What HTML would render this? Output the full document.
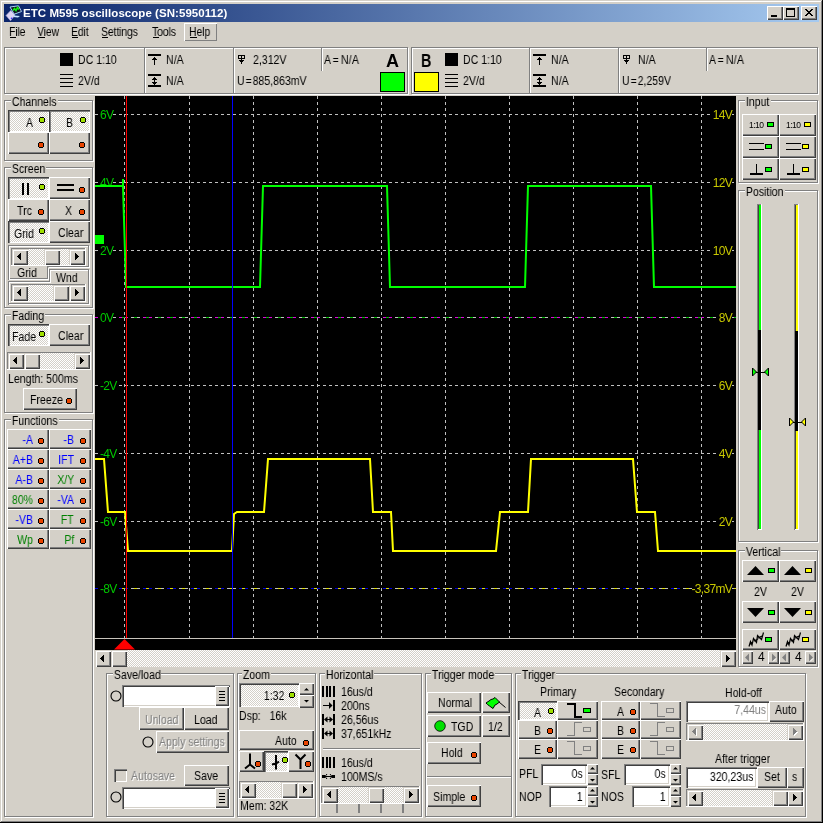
<!DOCTYPE html><html><head><meta charset="utf-8"><style>
*{margin:0;padding:0;box-sizing:border-box}
html,body{width:823px;height:823px;overflow:hidden}
body{background:#D4D0C8;position:relative;font-family:"Liberation Sans",sans-serif;font-size:11px;color:#000}
.a{position:absolute;display:block}
.t{position:absolute;white-space:nowrap;line-height:13px;height:13px;will-change:transform}
svg.a{will-change:transform}
svg.a{overflow:visible}
</style></head><body>
<div class="a" style="left:0px;top:0px;width:823px;height:1px;background:#D4D0C8"></div>
<div class="a" style="left:1px;top:1px;width:821px;height:1px;background:#fff"></div>
<div class="a" style="left:1px;top:1px;width:1px;height:821px;background:#fff"></div>
<div class="a" style="left:821px;top:1px;width:1px;height:821px;background:#808080"></div>
<div class="a" style="left:1px;top:821px;width:821px;height:1px;background:#808080"></div>
<div class="a" style="left:822px;top:0px;width:1px;height:823px;background:#000"></div>
<div class="a" style="left:0px;top:822px;width:823px;height:1px;background:#000"></div>
<div class="a" style="left:4px;top:4px;width:815px;height:18px;background:linear-gradient(to right,#0A246A,#A6CAF0)"></div>
<svg class="a" style="left:0px;top:0px" width="23" height="23" viewBox="0 0 23 23">
<path d="M6 15.5 L10.8 10.5 L15 15 L10.5 20.8 Z" fill="#DCD4F4" stroke="#B0A8D8" stroke-width="0.6"/>
<path d="M14 15.5 L20 16 L18 17.5 L13 17 Z" fill="#C8E4FF"/>
<circle cx="11.5" cy="18.3" r="0.8" fill="#3020FF"/>
<path d="M10 7 L18.5 5.8 L21.5 11.5 L14.2 14.2 Z" fill="#101820" stroke="#A8D0F8" stroke-width="1"/>
<path d="M13 10.5 L14.5 8.5 L16 10.5 L17.5 7.5 L19 9.5" stroke="#10F010" stroke-width="1.6" fill="none"/>
</svg>
<div class="t" style="left:23px;top:6.52px;color:#fff;font-size:11.5px;letter-spacing:0.05px;font-weight:bold;transform-origin:0 0;">ETC M595 oscilloscope (SN:5950112)</div>
<div class="a" style="left:767px;top:6px;width:16px;height:14px;background:#D4D0C8;box-shadow:inset 1px 1px 0 #fff,inset -1px -1px 0 #404040,inset -2px -2px 0 #808080;"></div>
<div class="a" style="left:783px;top:6px;width:16px;height:14px;background:#D4D0C8;box-shadow:inset 1px 1px 0 #fff,inset -1px -1px 0 #404040,inset -2px -2px 0 #808080;"></div>
<div class="a" style="left:801px;top:6px;width:16px;height:14px;background:#D4D0C8;box-shadow:inset 1px 1px 0 #fff,inset -1px -1px 0 #404040,inset -2px -2px 0 #808080;"></div>
<div class="a" style="left:771px;top:15px;width:6px;height:2px;background:#000"></div>
<div class="a" style="left:786px;top:8px;width:9px;height:9px;border:1px solid #000;border-top-width:2px"></div>
<svg class="a" style="left:801px;top:6px" width="16" height="14" shape-rendering="crispEdges"><path d="M4 3h2v1h1v1h2v-1h1v-1h2v1h-1v1h-1v1h-1v1h1v1h1v1h1v1h-2v-1h-1v-1h-2v1h-1v1h-2v-1h1v-1h1v-1h1v-1h-1v-1h-1v-1h-1z" fill="#000"/></svg>
<div class="t" style="left:9px;top:26.34px;color:#000;font-size:12px;letter-spacing:-0.2px;transform:scaleX(0.88);transform-origin:0 0;">File</div>
<div class="t" style="left:37px;top:26.34px;color:#000;font-size:12px;letter-spacing:-0.2px;transform:scaleX(0.88);transform-origin:0 0;">View</div>
<div class="t" style="left:71px;top:26.34px;color:#000;font-size:12px;letter-spacing:-0.2px;transform:scaleX(0.88);transform-origin:0 0;">Edit</div>
<div class="t" style="left:101px;top:26.34px;color:#000;font-size:12px;letter-spacing:-0.2px;transform:scaleX(0.88);transform-origin:0 0;">Settings</div>
<div class="t" style="left:152px;top:26.34px;color:#000;font-size:12px;letter-spacing:-0.2px;transform:scaleX(0.88);transform-origin:0 0;">Tools</div>
<div class="a" style="left:184px;top:23px;width:33px;height:18px;box-shadow:inset 1px 1px 0 #fff,inset -1px -1px 0 #808080"></div>
<div class="t" style="left:189px;top:26.34px;color:#000;font-size:12px;letter-spacing:-0.2px;transform:scaleX(0.88);transform-origin:0 0;">Help</div>
<div class="a" style="left:10px;top:37px;width:6px;height:1px;background:#000"></div>
<div class="a" style="left:38px;top:37px;width:7px;height:1px;background:#000"></div>
<div class="a" style="left:72px;top:37px;width:6px;height:1px;background:#000"></div>
<div class="a" style="left:102px;top:37px;width:6px;height:1px;background:#000"></div>
<div class="a" style="left:153px;top:37px;width:6px;height:1px;background:#000"></div>
<div class="a" style="left:190px;top:37px;width:7px;height:1px;background:#000"></div>
<div class="a" style="left:5px;top:48px;width:404px;height:47px;border:1px solid #fff"></div>
<div class="a" style="left:4px;top:47px;width:404px;height:47px;border:1px solid #808080"></div>
<div class="a" style="left:412px;top:48px;width:407px;height:47px;border:1px solid #fff"></div>
<div class="a" style="left:411px;top:47px;width:407px;height:47px;border:1px solid #808080"></div>
<div class="a" style="left:60px;top:53px;width:13px;height:13px;background:#000"></div>
<div class="t" style="left:78px;top:54.34px;color:#000;font-size:12px;letter-spacing:0px;transform:scaleX(0.88);transform-origin:0 0;">DC 1:10</div>
<div class="a" style="left:60px;top:74px;width:13px;height:1px;background:#000"></div>
<div class="a" style="left:60px;top:78px;width:13px;height:1px;background:#000"></div>
<div class="a" style="left:60px;top:82px;width:13px;height:1px;background:#000"></div>
<div class="a" style="left:60px;top:86px;width:13px;height:1px;background:#000"></div>
<div class="t" style="left:78px;top:75.34px;color:#000;font-size:12px;letter-spacing:0px;transform:scaleX(0.88);transform-origin:0 0;">2V/d</div>
<div class="a" style="left:144px;top:48px;width:1px;height:45px;background:#808080"></div>
<div class="a" style="left:145px;top:48px;width:1px;height:45px;background:#fff"></div>
<svg class="a" style="left:148px;top:53px;" width="13" height="13" viewBox="148 53 13 13" shape-rendering="crispEdges"><path d="M148 54h13v2h-13z M154 57h1v8h-1z M152 59h5v1h-5z M153 58h3v1h-3z" fill="#000"/></svg>
<div class="t" style="left:166px;top:54.34px;color:#000;font-size:12px;letter-spacing:0px;transform:scaleX(0.88);transform-origin:0 0;">N/A</div>
<svg class="a" style="left:148px;top:73px;" width="13" height="15" viewBox="148 73 13 15" shape-rendering="crispEdges"><path d="M148 74h13v2h-13z M148 85h13v2h-13z M154 77h1v8h-1z M153 78h3v1h-3z M152 79h5v1h-5z M153 83h3v1h-3z M152 82h5v1h-5z" fill="#000"/></svg>
<div class="t" style="left:166px;top:75.34px;color:#000;font-size:12px;letter-spacing:0px;transform:scaleX(0.88);transform-origin:0 0;">N/A</div>
<div class="a" style="left:233px;top:48px;width:1px;height:45px;background:#808080"></div>
<div class="a" style="left:234px;top:48px;width:1px;height:45px;background:#fff"></div>
<svg class="a" style="left:238px;top:54px;" width="8" height="10" viewBox="238 54 8 10" shape-rendering="crispEdges"><path d="M238 55h7v1h-7z M238 55h1v3h-1z M244 55h1v3h-1z M238 58h7v1h-7z M241 56h1v8h-1z M239 60h5v1h-5z M240 61h3v1h-3z" fill="#000"/></svg>
<div class="t" style="left:253px;top:54.34px;color:#000;font-size:12px;letter-spacing:0px;transform:scaleX(0.88);transform-origin:0 0;">2,312V</div>
<div class="t" style="left:237px;top:75.34px;color:#000;font-size:12px;letter-spacing:0px;transform:scaleX(0.88);transform-origin:0 0;">U<span style="margin:0 1px">=</span>885,863mV</div>
<div class="a" style="left:321px;top:48px;width:1px;height:23px;background:#808080"></div>
<div class="a" style="left:322px;top:48px;width:1px;height:23px;background:#fff"></div>
<div class="t" style="left:324px;top:54.34px;color:#000;font-size:12px;letter-spacing:0.3px;transform:scaleX(0.88);transform-origin:0 0;">A<span style="margin:0 2px 0 1.5px">=</span>N/A</div>
<div class="t" style="left:386px;top:55.26px;color:#000;font-size:18px;letter-spacing:0px;font-weight:bold;transform-origin:0 0;">A</div>
<div class="a" style="left:380px;top:72px;width:25px;height:20px;background:#00FF00;border:1px solid #000"></div>
<div class="a" style="left:445px;top:53px;width:13px;height:13px;background:#000"></div>
<div class="t" style="left:463px;top:54.34px;color:#000;font-size:12px;letter-spacing:0px;transform:scaleX(0.88);transform-origin:0 0;">DC 1:10</div>
<div class="a" style="left:445px;top:74px;width:13px;height:1px;background:#000"></div>
<div class="a" style="left:445px;top:78px;width:13px;height:1px;background:#000"></div>
<div class="a" style="left:445px;top:82px;width:13px;height:1px;background:#000"></div>
<div class="a" style="left:445px;top:86px;width:13px;height:1px;background:#000"></div>
<div class="t" style="left:463px;top:75.34px;color:#000;font-size:12px;letter-spacing:0px;transform:scaleX(0.88);transform-origin:0 0;">2V/d</div>
<div class="a" style="left:529px;top:48px;width:1px;height:45px;background:#808080"></div>
<div class="a" style="left:530px;top:48px;width:1px;height:45px;background:#fff"></div>
<svg class="a" style="left:533px;top:53px;" width="13" height="13" viewBox="533 53 13 13" shape-rendering="crispEdges"><path d="M533 54h13v2h-13z M539 57h1v8h-1z M537 59h5v1h-5z M538 58h3v1h-3z" fill="#000"/></svg>
<div class="t" style="left:551px;top:54.34px;color:#000;font-size:12px;letter-spacing:0px;transform:scaleX(0.88);transform-origin:0 0;">N/A</div>
<svg class="a" style="left:533px;top:73px;" width="13" height="15" viewBox="533 73 13 15" shape-rendering="crispEdges"><path d="M533 74h13v2h-13z M533 85h13v2h-13z M539 77h1v8h-1z M538 78h3v1h-3z M537 79h5v1h-5z M538 83h3v1h-3z M537 82h5v1h-5z" fill="#000"/></svg>
<div class="t" style="left:551px;top:75.34px;color:#000;font-size:12px;letter-spacing:0px;transform:scaleX(0.88);transform-origin:0 0;">N/A</div>
<div class="a" style="left:618px;top:48px;width:1px;height:45px;background:#808080"></div>
<div class="a" style="left:619px;top:48px;width:1px;height:45px;background:#fff"></div>
<svg class="a" style="left:623px;top:54px;" width="8" height="10" viewBox="623 54 8 10" shape-rendering="crispEdges"><path d="M623 55h7v1h-7z M623 55h1v3h-1z M629 55h1v3h-1z M623 58h7v1h-7z M626 56h1v8h-1z M624 60h5v1h-5z M625 61h3v1h-3z" fill="#000"/></svg>
<div class="t" style="left:638px;top:54.34px;color:#000;font-size:12px;letter-spacing:0px;transform:scaleX(0.88);transform-origin:0 0;">N/A</div>
<div class="t" style="left:622px;top:75.34px;color:#000;font-size:12px;letter-spacing:0px;transform:scaleX(0.88);transform-origin:0 0;">U<span style="margin:0 1px">=</span>2,259V</div>
<div class="a" style="left:706px;top:48px;width:1px;height:23px;background:#808080"></div>
<div class="a" style="left:707px;top:48px;width:1px;height:23px;background:#fff"></div>
<div class="t" style="left:709px;top:54.34px;color:#000;font-size:12px;letter-spacing:0.3px;transform:scaleX(0.88);transform-origin:0 0;">A<span style="margin:0 2px 0 1.5px">=</span>N/A</div>
<div class="t" style="left:421px;top:55.26px;color:#000;font-size:18px;letter-spacing:0px;font-weight:bold;transform-origin:0 0;transform:scaleX(0.8);transform-origin:0 0">B</div>
<div class="a" style="left:414px;top:72px;width:25px;height:20px;background:#FFFF00;border:1px solid #000"></div>
<div class="a" style="left:5px;top:101px;width:89px;height:61px;border:1px solid #fff"></div>
<div class="a" style="left:4px;top:100px;width:89px;height:61px;border:1px solid #808080"></div>
<div class="t" style="left:11px;top:96.34px;padding:0 1px;background:#D4D0C8;font-size:12px;transform:scaleX(0.88);transform-origin:0 0">Channels</div>
<div class="a" style="left:8px;top:110px;width:41px;height:22px;background:repeating-conic-gradient(#fff 0 25%,#D4D0C8 0 50%) 0 0/2px 2px;box-shadow:inset 1px 1px 0 #404040,inset 2px 2px 0 #808080,inset -1px -1px 0 #fff;"></div>
<div class="a" style="left:49px;top:110px;width:41px;height:22px;background:repeating-conic-gradient(#fff 0 25%,#D4D0C8 0 50%) 0 0/2px 2px;box-shadow:inset 1px 1px 0 #404040,inset 2px 2px 0 #808080,inset -1px -1px 0 #fff;"></div>
<div class="a" style="left:8px;top:132px;width:41px;height:22px;background:#D4D0C8;box-shadow:inset 1px 1px 0 #fff,inset -1px -1px 0 #404040,inset -2px -2px 0 #808080;"></div>
<div class="a" style="left:49px;top:132px;width:41px;height:22px;background:#D4D0C8;box-shadow:inset 1px 1px 0 #fff,inset -1px -1px 0 #404040,inset -2px -2px 0 #808080;"></div>
<div class="t" style="left:26px;top:117.34px;color:#000;font-size:12px;letter-spacing:0px;transform:scaleX(0.88);transform-origin:0 0;">A</div>
<svg class="a" style="left:39px;top:117px" width="6" height="6" shape-rendering="crispEdges"><path d="M1 0h4v1h1v4h-1v1h-4v-1h-1v-4h1z" fill="#000"/><rect x="1" y="1" width="4" height="4" fill="#A0E000"/></svg>
<div class="t" style="left:66px;top:117.34px;color:#000;font-size:12px;letter-spacing:0px;transform:scaleX(0.88);transform-origin:0 0;">B</div>
<svg class="a" style="left:80px;top:117px" width="6" height="6" shape-rendering="crispEdges"><path d="M1 0h4v1h1v4h-1v1h-4v-1h-1v-4h1z" fill="#000"/><rect x="1" y="1" width="4" height="4" fill="#A0E000"/></svg>
<svg class="a" style="left:38px;top:142px" width="6" height="6" shape-rendering="crispEdges"><path d="M1 0h4v1h1v4h-1v1h-4v-1h-1v-4h1z" fill="#000"/><rect x="1" y="1" width="4" height="4" fill="#E84400"/></svg>
<svg class="a" style="left:79px;top:142px" width="6" height="6" shape-rendering="crispEdges"><path d="M1 0h4v1h1v4h-1v1h-4v-1h-1v-4h1z" fill="#000"/><rect x="1" y="1" width="4" height="4" fill="#E84400"/></svg>
<div class="a" style="left:5px;top:168px;width:89px;height:141px;border:1px solid #fff"></div>
<div class="a" style="left:4px;top:167px;width:89px;height:141px;border:1px solid #808080"></div>
<div class="t" style="left:11px;top:163.34px;padding:0 1px;background:#D4D0C8;font-size:12px;transform:scaleX(0.88);transform-origin:0 0">Screen</div>
<div class="a" style="left:8px;top:177px;width:41px;height:22px;background:repeating-conic-gradient(#fff 0 25%,#D4D0C8 0 50%) 0 0/2px 2px;box-shadow:inset 1px 1px 0 #404040,inset 2px 2px 0 #808080,inset -1px -1px 0 #fff;"></div>
<div class="a" style="left:49px;top:177px;width:41px;height:22px;background:#D4D0C8;box-shadow:inset 1px 1px 0 #fff,inset -1px -1px 0 #404040,inset -2px -2px 0 #808080;"></div>
<div class="a" style="left:22px;top:183px;width:2px;height:12px;background:#000"></div>
<div class="a" style="left:27px;top:183px;width:2px;height:12px;background:#000"></div>
<svg class="a" style="left:39px;top:184px" width="6" height="6" shape-rendering="crispEdges"><path d="M1 0h4v1h1v4h-1v1h-4v-1h-1v-4h1z" fill="#000"/><rect x="1" y="1" width="4" height="4" fill="#A0E000"/></svg>
<div class="a" style="left:57px;top:184px;width:17px;height:2px;background:#000"></div>
<div class="a" style="left:57px;top:189px;width:17px;height:2px;background:#000"></div>
<svg class="a" style="left:79px;top:187px" width="6" height="6" shape-rendering="crispEdges"><path d="M1 0h4v1h1v4h-1v1h-4v-1h-1v-4h1z" fill="#000"/><rect x="1" y="1" width="4" height="4" fill="#E84400"/></svg>
<div class="a" style="left:8px;top:199px;width:41px;height:22px;background:#D4D0C8;box-shadow:inset 1px 1px 0 #fff,inset -1px -1px 0 #404040,inset -2px -2px 0 #808080;"></div>
<div class="a" style="left:49px;top:199px;width:41px;height:22px;background:#D4D0C8;box-shadow:inset 1px 1px 0 #fff,inset -1px -1px 0 #404040,inset -2px -2px 0 #808080;"></div>
<div class="t" style="left:17px;top:205.34px;color:#000;font-size:12px;letter-spacing:0px;transform:scaleX(0.88);transform-origin:0 0;">Trc</div>
<svg class="a" style="left:38px;top:209px" width="6" height="6" shape-rendering="crispEdges"><path d="M1 0h4v1h1v4h-1v1h-4v-1h-1v-4h1z" fill="#000"/><rect x="1" y="1" width="4" height="4" fill="#E84400"/></svg>
<div class="t" style="left:65px;top:205.34px;color:#000;font-size:12px;letter-spacing:0px;transform:scaleX(0.88);transform-origin:0 0;">X</div>
<svg class="a" style="left:79px;top:209px" width="6" height="6" shape-rendering="crispEdges"><path d="M1 0h4v1h1v4h-1v1h-4v-1h-1v-4h1z" fill="#000"/><rect x="1" y="1" width="4" height="4" fill="#E84400"/></svg>
<div class="a" style="left:8px;top:221px;width:41px;height:22px;background:repeating-conic-gradient(#fff 0 25%,#D4D0C8 0 50%) 0 0/2px 2px;box-shadow:inset 1px 1px 0 #404040,inset 2px 2px 0 #808080,inset -1px -1px 0 #fff;"></div>
<div class="a" style="left:49px;top:221px;width:41px;height:22px;background:#D4D0C8;box-shadow:inset 1px 1px 0 #fff,inset -1px -1px 0 #404040,inset -2px -2px 0 #808080;"></div>
<div class="t" style="left:14px;top:228.34px;color:#000;font-size:12px;letter-spacing:0px;transform:scaleX(0.88);transform-origin:0 0;">Grid</div>
<svg class="a" style="left:39px;top:228px" width="6" height="6" shape-rendering="crispEdges"><path d="M1 0h4v1h1v4h-1v1h-4v-1h-1v-4h1z" fill="#000"/><rect x="1" y="1" width="4" height="4" fill="#A0E000"/></svg>
<div class="t" style="left:58px;top:227.34px;color:#000;font-size:12px;letter-spacing:0px;transform:scaleX(0.88);transform-origin:0 0;">Clear</div>
<svg class="a" style="left:8px;top:245px;" width="82" height="61" viewBox="8 245 82 61" shape-rendering="crispEdges"><path d="M8.5 279.5V245.5H88.5V266.5H47.5V278.5H8.5" fill="none" stroke="#808080"/><path d="M9.5 278.5V246.5H87.5M48.5 267.5H89.5V245.5M48.5 267.5V279.5H8.5" fill="none" stroke="#fff"/><path d="M8.5 304.5V281.5H49.5V269.5H88.5V303.5H8.5" fill="none" stroke="#808080"/><path d="M9.5 302.5V282.5H50.5V270.5H87.5M89.5 269.5V304.5H8.5" fill="none" stroke="#fff"/></svg>
<div class="a" style="left:11px;top:248px;width:74px;height:1px;background:#808080"></div>
<div class="a" style="left:11px;top:248px;width:1px;height:17px;background:#808080"></div>
<div class="a" style="left:11px;top:265px;width:75px;height:1px;background:#fff"></div>
<div class="a" style="left:85px;top:248px;width:1px;height:18px;background:#fff"></div>
<div class="a" style="left:12px;top:249px;width:73px;height:16px;background:repeating-conic-gradient(#fff 0 25%,#D4D0C8 0 50%) 0 0/2px 2px"></div>
<div class="a" style="left:12px;top:249px;width:16px;height:16px;background:#D4D0C8;box-shadow:inset 1px 1px 0 #D4D0C8,inset 2px 2px 0 #fff,inset -1px -1px 0 #404040,inset -2px -2px 0 #808080"></div>
<div class="a" style="left:69px;top:249px;width:16px;height:16px;background:#D4D0C8;box-shadow:inset 1px 1px 0 #D4D0C8,inset 2px 2px 0 #fff,inset -1px -1px 0 #404040,inset -2px -2px 0 #808080"></div>
<div class="a" style="left:44px;top:249px;width:16px;height:16px;background:#D4D0C8;box-shadow:inset 1px 1px 0 #D4D0C8,inset 2px 2px 0 #fff,inset -1px -1px 0 #404040,inset -2px -2px 0 #808080"></div>
<svg class="a" style="left:12px;top:249px;" width="73" height="16" viewBox="12 249 73 16" shape-rendering="crispEdges"><path d="M17 256h1v1h-1zM18 255h1v3h-1zM19 254h1v5h-1zM20 253h1v7h-1zM75 253h1v7h-1zM76 254h1v5h-1zM77 255h1v3h-1zM78 256h1v1h-1z" fill="#000"/></svg>
<div class="t" style="left:17px;top:267.34px;color:#000;font-size:12px;letter-spacing:0px;transform:scaleX(0.88);transform-origin:0 0;">Grid</div>
<div class="t" style="left:56px;top:272.34px;color:#000;font-size:12px;letter-spacing:0px;transform:scaleX(0.88);transform-origin:0 0;">Wnd</div>
<div class="a" style="left:11px;top:284px;width:74px;height:1px;background:#808080"></div>
<div class="a" style="left:11px;top:284px;width:1px;height:17px;background:#808080"></div>
<div class="a" style="left:11px;top:301px;width:75px;height:1px;background:#fff"></div>
<div class="a" style="left:85px;top:284px;width:1px;height:18px;background:#fff"></div>
<div class="a" style="left:12px;top:285px;width:73px;height:16px;background:repeating-conic-gradient(#fff 0 25%,#D4D0C8 0 50%) 0 0/2px 2px"></div>
<div class="a" style="left:12px;top:285px;width:16px;height:16px;background:#D4D0C8;box-shadow:inset 1px 1px 0 #D4D0C8,inset 2px 2px 0 #fff,inset -1px -1px 0 #404040,inset -2px -2px 0 #808080"></div>
<div class="a" style="left:69px;top:285px;width:16px;height:16px;background:#D4D0C8;box-shadow:inset 1px 1px 0 #D4D0C8,inset 2px 2px 0 #fff,inset -1px -1px 0 #404040,inset -2px -2px 0 #808080"></div>
<div class="a" style="left:53px;top:285px;width:16px;height:16px;background:#D4D0C8;box-shadow:inset 1px 1px 0 #D4D0C8,inset 2px 2px 0 #fff,inset -1px -1px 0 #404040,inset -2px -2px 0 #808080"></div>
<svg class="a" style="left:12px;top:285px;" width="73" height="16" viewBox="12 285 73 16" shape-rendering="crispEdges"><path d="M17 292h1v1h-1zM18 291h1v3h-1zM19 290h1v5h-1zM20 289h1v7h-1zM75 289h1v7h-1zM76 290h1v5h-1zM77 291h1v3h-1zM78 292h1v1h-1z" fill="#000"/></svg>
<div class="a" style="left:5px;top:315px;width:89px;height:99px;border:1px solid #fff"></div>
<div class="a" style="left:4px;top:314px;width:89px;height:99px;border:1px solid #808080"></div>
<div class="t" style="left:11px;top:310.34px;padding:0 1px;background:#D4D0C8;font-size:12px;transform:scaleX(0.88);transform-origin:0 0">Fading</div>
<div class="a" style="left:8px;top:324px;width:41px;height:22px;background:repeating-conic-gradient(#fff 0 25%,#D4D0C8 0 50%) 0 0/2px 2px;box-shadow:inset 1px 1px 0 #404040,inset 2px 2px 0 #808080,inset -1px -1px 0 #fff;"></div>
<div class="a" style="left:49px;top:324px;width:41px;height:22px;background:#D4D0C8;box-shadow:inset 1px 1px 0 #fff,inset -1px -1px 0 #404040,inset -2px -2px 0 #808080;"></div>
<div class="t" style="left:12px;top:331.34px;color:#000;font-size:12px;letter-spacing:0px;transform:scaleX(0.88);transform-origin:0 0;">Fade</div>
<svg class="a" style="left:39px;top:331px" width="6" height="6" shape-rendering="crispEdges"><path d="M1 0h4v1h1v4h-1v1h-4v-1h-1v-4h1z" fill="#000"/><rect x="1" y="1" width="4" height="4" fill="#A0E000"/></svg>
<div class="t" style="left:58px;top:330.34px;color:#000;font-size:12px;letter-spacing:0px;transform:scaleX(0.88);transform-origin:0 0;">Clear</div>
<div class="a" style="left:7px;top:352px;width:83px;height:1px;background:#808080"></div>
<div class="a" style="left:7px;top:352px;width:1px;height:17px;background:#808080"></div>
<div class="a" style="left:7px;top:369px;width:84px;height:1px;background:#fff"></div>
<div class="a" style="left:90px;top:352px;width:1px;height:18px;background:#fff"></div>
<div class="a" style="left:8px;top:353px;width:82px;height:16px;background:repeating-conic-gradient(#fff 0 25%,#D4D0C8 0 50%) 0 0/2px 2px"></div>
<div class="a" style="left:8px;top:353px;width:16px;height:16px;background:#D4D0C8;box-shadow:inset 1px 1px 0 #D4D0C8,inset 2px 2px 0 #fff,inset -1px -1px 0 #404040,inset -2px -2px 0 #808080"></div>
<div class="a" style="left:74px;top:353px;width:16px;height:16px;background:#D4D0C8;box-shadow:inset 1px 1px 0 #D4D0C8,inset 2px 2px 0 #fff,inset -1px -1px 0 #404040,inset -2px -2px 0 #808080"></div>
<div class="a" style="left:24px;top:353px;width:16px;height:16px;background:#D4D0C8;box-shadow:inset 1px 1px 0 #D4D0C8,inset 2px 2px 0 #fff,inset -1px -1px 0 #404040,inset -2px -2px 0 #808080"></div>
<svg class="a" style="left:8px;top:353px;" width="82" height="16" viewBox="8 353 82 16" shape-rendering="crispEdges"><path d="M13 360h1v1h-1zM14 359h1v3h-1zM15 358h1v5h-1zM16 357h1v7h-1zM80 357h1v7h-1zM81 358h1v5h-1zM82 359h1v3h-1zM83 360h1v1h-1z" fill="#000"/></svg>
<div class="t" style="left:8px;top:373.34px;color:#000;font-size:12px;letter-spacing:0px;transform:scaleX(0.88);transform-origin:0 0;">Length: 500ms</div>
<div class="a" style="left:23px;top:388px;width:54px;height:22px;background:#D4D0C8;box-shadow:inset 1px 1px 0 #fff,inset -1px -1px 0 #404040,inset -2px -2px 0 #808080;"></div>
<div class="t" style="left:30px;top:394.34px;color:#000;font-size:12px;letter-spacing:0px;transform:scaleX(0.88);transform-origin:0 0;">Freeze</div>
<svg class="a" style="left:66px;top:398px" width="6" height="6" shape-rendering="crispEdges"><path d="M1 0h4v1h1v4h-1v1h-4v-1h-1v-4h1z" fill="#000"/><rect x="1" y="1" width="4" height="4" fill="#E84400"/></svg>
<div class="a" style="left:5px;top:420px;width:89px;height:398px;border:1px solid #fff"></div>
<div class="a" style="left:4px;top:419px;width:89px;height:398px;border:1px solid #808080"></div>
<div class="t" style="left:11px;top:415.34px;padding:0 1px;background:#D4D0C8;font-size:12px;transform:scaleX(0.88);transform-origin:0 0">Functions</div>
<div class="a" style="left:7px;top:429px;width:42px;height:20px;background:#D4D0C8;box-shadow:inset 1px 1px 0 #fff,inset -1px -1px 0 #404040,inset -2px -2px 0 #808080;"></div>
<div class="a" style="left:49px;top:429px;width:42px;height:20px;background:#D4D0C8;box-shadow:inset 1px 1px 0 #fff,inset -1px -1px 0 #404040,inset -2px -2px 0 #808080;"></div>
<div class="t" style="right:790px;top:434.34px;color:#0000FF;font-size:12px;letter-spacing:0px;transform:scaleX(0.88);transform-origin:100% 0;">-A</div>
<svg class="a" style="left:38px;top:438px" width="6" height="6" shape-rendering="crispEdges"><path d="M1 0h4v1h1v4h-1v1h-4v-1h-1v-4h1z" fill="#000"/><rect x="1" y="1" width="4" height="4" fill="#E84400"/></svg>
<div class="t" style="right:749px;top:434.34px;color:#0000FF;font-size:12px;letter-spacing:0px;transform:scaleX(0.88);transform-origin:100% 0;">-B</div>
<svg class="a" style="left:80px;top:438px" width="6" height="6" shape-rendering="crispEdges"><path d="M1 0h4v1h1v4h-1v1h-4v-1h-1v-4h1z" fill="#000"/><rect x="1" y="1" width="4" height="4" fill="#E84400"/></svg>
<div class="a" style="left:7px;top:449px;width:42px;height:20px;background:#D4D0C8;box-shadow:inset 1px 1px 0 #fff,inset -1px -1px 0 #404040,inset -2px -2px 0 #808080;"></div>
<div class="a" style="left:49px;top:449px;width:42px;height:20px;background:#D4D0C8;box-shadow:inset 1px 1px 0 #fff,inset -1px -1px 0 #404040,inset -2px -2px 0 #808080;"></div>
<div class="t" style="right:790px;top:454.34px;color:#0000FF;font-size:12px;letter-spacing:0px;transform:scaleX(0.88);transform-origin:100% 0;">A+B</div>
<svg class="a" style="left:38px;top:458px" width="6" height="6" shape-rendering="crispEdges"><path d="M1 0h4v1h1v4h-1v1h-4v-1h-1v-4h1z" fill="#000"/><rect x="1" y="1" width="4" height="4" fill="#E84400"/></svg>
<div class="t" style="right:749px;top:454.34px;color:#0000FF;font-size:12px;letter-spacing:0px;transform:scaleX(0.88);transform-origin:100% 0;">IFT</div>
<svg class="a" style="left:80px;top:458px" width="6" height="6" shape-rendering="crispEdges"><path d="M1 0h4v1h1v4h-1v1h-4v-1h-1v-4h1z" fill="#000"/><rect x="1" y="1" width="4" height="4" fill="#E84400"/></svg>
<div class="a" style="left:7px;top:469px;width:42px;height:20px;background:#D4D0C8;box-shadow:inset 1px 1px 0 #fff,inset -1px -1px 0 #404040,inset -2px -2px 0 #808080;"></div>
<div class="a" style="left:49px;top:469px;width:42px;height:20px;background:#D4D0C8;box-shadow:inset 1px 1px 0 #fff,inset -1px -1px 0 #404040,inset -2px -2px 0 #808080;"></div>
<div class="t" style="right:790px;top:474.34px;color:#0000FF;font-size:12px;letter-spacing:0px;transform:scaleX(0.88);transform-origin:100% 0;">A-B</div>
<svg class="a" style="left:38px;top:478px" width="6" height="6" shape-rendering="crispEdges"><path d="M1 0h4v1h1v4h-1v1h-4v-1h-1v-4h1z" fill="#000"/><rect x="1" y="1" width="4" height="4" fill="#E84400"/></svg>
<div class="t" style="right:749px;top:474.34px;color:#008000;font-size:12px;letter-spacing:0px;transform:scaleX(0.88);transform-origin:100% 0;">X/Y</div>
<svg class="a" style="left:80px;top:478px" width="6" height="6" shape-rendering="crispEdges"><path d="M1 0h4v1h1v4h-1v1h-4v-1h-1v-4h1z" fill="#000"/><rect x="1" y="1" width="4" height="4" fill="#E84400"/></svg>
<div class="a" style="left:7px;top:489px;width:42px;height:20px;background:#D4D0C8;box-shadow:inset 1px 1px 0 #fff,inset -1px -1px 0 #404040,inset -2px -2px 0 #808080;"></div>
<div class="a" style="left:49px;top:489px;width:42px;height:20px;background:#D4D0C8;box-shadow:inset 1px 1px 0 #fff,inset -1px -1px 0 #404040,inset -2px -2px 0 #808080;"></div>
<div class="t" style="right:790px;top:494.34px;color:#008000;font-size:12px;letter-spacing:0px;transform:scaleX(0.88);transform-origin:100% 0;">80%</div>
<svg class="a" style="left:38px;top:498px" width="6" height="6" shape-rendering="crispEdges"><path d="M1 0h4v1h1v4h-1v1h-4v-1h-1v-4h1z" fill="#000"/><rect x="1" y="1" width="4" height="4" fill="#E84400"/></svg>
<div class="t" style="right:749px;top:494.34px;color:#0000FF;font-size:12px;letter-spacing:0px;transform:scaleX(0.88);transform-origin:100% 0;">-VA</div>
<svg class="a" style="left:80px;top:498px" width="6" height="6" shape-rendering="crispEdges"><path d="M1 0h4v1h1v4h-1v1h-4v-1h-1v-4h1z" fill="#000"/><rect x="1" y="1" width="4" height="4" fill="#E84400"/></svg>
<div class="a" style="left:7px;top:509px;width:42px;height:20px;background:#D4D0C8;box-shadow:inset 1px 1px 0 #fff,inset -1px -1px 0 #404040,inset -2px -2px 0 #808080;"></div>
<div class="a" style="left:49px;top:509px;width:42px;height:20px;background:#D4D0C8;box-shadow:inset 1px 1px 0 #fff,inset -1px -1px 0 #404040,inset -2px -2px 0 #808080;"></div>
<div class="t" style="right:790px;top:514.34px;color:#0000FF;font-size:12px;letter-spacing:0px;transform:scaleX(0.88);transform-origin:100% 0;">-VB</div>
<svg class="a" style="left:38px;top:518px" width="6" height="6" shape-rendering="crispEdges"><path d="M1 0h4v1h1v4h-1v1h-4v-1h-1v-4h1z" fill="#000"/><rect x="1" y="1" width="4" height="4" fill="#E84400"/></svg>
<div class="t" style="right:749px;top:514.34px;color:#008000;font-size:12px;letter-spacing:0px;transform:scaleX(0.88);transform-origin:100% 0;">FT</div>
<svg class="a" style="left:80px;top:518px" width="6" height="6" shape-rendering="crispEdges"><path d="M1 0h4v1h1v4h-1v1h-4v-1h-1v-4h1z" fill="#000"/><rect x="1" y="1" width="4" height="4" fill="#E84400"/></svg>
<div class="a" style="left:7px;top:529px;width:42px;height:20px;background:#D4D0C8;box-shadow:inset 1px 1px 0 #fff,inset -1px -1px 0 #404040,inset -2px -2px 0 #808080;"></div>
<div class="a" style="left:49px;top:529px;width:42px;height:20px;background:#D4D0C8;box-shadow:inset 1px 1px 0 #fff,inset -1px -1px 0 #404040,inset -2px -2px 0 #808080;"></div>
<div class="t" style="right:790px;top:534.34px;color:#008000;font-size:12px;letter-spacing:0px;transform:scaleX(0.88);transform-origin:100% 0;">Wp</div>
<svg class="a" style="left:38px;top:538px" width="6" height="6" shape-rendering="crispEdges"><path d="M1 0h4v1h1v4h-1v1h-4v-1h-1v-4h1z" fill="#000"/><rect x="1" y="1" width="4" height="4" fill="#E84400"/></svg>
<div class="t" style="right:749px;top:534.34px;color:#008000;font-size:12px;letter-spacing:0px;transform:scaleX(0.88);transform-origin:100% 0;">Pf</div>
<svg class="a" style="left:80px;top:538px" width="6" height="6" shape-rendering="crispEdges"><path d="M1 0h4v1h1v4h-1v1h-4v-1h-1v-4h1z" fill="#000"/><rect x="1" y="1" width="4" height="4" fill="#E84400"/></svg>
<svg class="a" style="left:95px;top:96px;" width="641" height="554" viewBox="95 96 641 554" shape-rendering="crispEdges"><rect x="95" y="96" width="641" height="554" fill="#000"/><rect x="95" y="638" width="641" height="1" fill="#C8C4BC"/><line x1="124.5" y1="96" x2="124.5" y2="638" stroke="#C0C0C0" stroke-dasharray="3 3"/><line x1="189.5" y1="96" x2="189.5" y2="638" stroke="#C0C0C0" stroke-dasharray="3 3"/><line x1="253.5" y1="96" x2="253.5" y2="638" stroke="#C0C0C0" stroke-dasharray="3 3"/><line x1="317.5" y1="96" x2="317.5" y2="638" stroke="#C0C0C0" stroke-dasharray="3 3"/><line x1="381.5" y1="96" x2="381.5" y2="638" stroke="#C0C0C0" stroke-dasharray="3 3"/><line x1="445.5" y1="96" x2="445.5" y2="638" stroke="#C0C0C0" stroke-dasharray="3 3"/><line x1="509.5" y1="96" x2="509.5" y2="638" stroke="#C0C0C0" stroke-dasharray="3 3"/><line x1="573.5" y1="96" x2="573.5" y2="638" stroke="#C0C0C0" stroke-dasharray="3 3"/><line x1="637.5" y1="96" x2="637.5" y2="638" stroke="#C0C0C0" stroke-dasharray="3 3"/><line x1="701.5" y1="96" x2="701.5" y2="638" stroke="#C0C0C0" stroke-dasharray="3 3"/><line x1="95" y1="114.5" x2="736" y2="114.5" stroke="#C0C0C0" stroke-dasharray="3 3"/><line x1="95" y1="182.5" x2="736" y2="182.5" stroke="#C0C0C0" stroke-dasharray="3 3"/><line x1="95" y1="250.5" x2="736" y2="250.5" stroke="#C0C0C0" stroke-dasharray="3 3"/><line x1="95" y1="385.5" x2="736" y2="385.5" stroke="#C0C0C0" stroke-dasharray="3 3"/><line x1="95" y1="453.5" x2="736" y2="453.5" stroke="#C0C0C0" stroke-dasharray="3 3"/><line x1="95" y1="521.5" x2="736" y2="521.5" stroke="#C0C0C0" stroke-dasharray="3 3"/><line x1="95" y1="317.5" x2="736" y2="317.5" stroke="#C0C0C0" stroke-dasharray="3 3"/><line x1="95" y1="317.5" x2="736" y2="317.5" stroke="#E000E0" stroke-dasharray="3 3 3 15"/><line x1="98" y1="317.5" x2="736" y2="317.5" stroke="#00C000" stroke-dasharray="3 9"/><line x1="95" y1="588.5" x2="736" y2="588.5" stroke="#C0C0C0" stroke-dasharray="3 3"/><line x1="95" y1="588.5" x2="736" y2="588.5" stroke="#0000E0" stroke-dasharray="3 3 3 15"/><line x1="98" y1="588.5" x2="736" y2="588.5" stroke="#E0E000" stroke-dasharray="3 9"/><rect x="98" y="108" width="15" height="13" fill="#000"/><rect x="98" y="176" width="15" height="13" fill="#000"/><rect x="98" y="244" width="15" height="13" fill="#000"/><rect x="98" y="311" width="15" height="13" fill="#000"/><rect x="98" y="379" width="18" height="13" fill="#000"/><rect x="98" y="447" width="18" height="13" fill="#000"/><rect x="98" y="515" width="18" height="13" fill="#000"/><rect x="98" y="582" width="18" height="13" fill="#000"/><rect x="712" y="108" width="20" height="13" fill="#000"/><rect x="712" y="176" width="20" height="13" fill="#000"/><rect x="712" y="244" width="20" height="13" fill="#000"/><rect x="718" y="311" width="14" height="13" fill="#000"/><rect x="718" y="379" width="14" height="13" fill="#000"/><rect x="718" y="447" width="14" height="13" fill="#000"/><rect x="718" y="515" width="14" height="13" fill="#000"/><rect x="692" y="582" width="40" height="13" fill="#000"/><g font-family="Liberation Sans" font-size="12" letter-spacing="-0.7" shape-rendering="auto"><text x="100" y="119" fill="#00C800">6V</text><text x="100" y="187" fill="#00C800">4V</text><text x="100" y="255" fill="#00C800">2V</text><text x="100" y="322" fill="#00C800">0V</text><text x="100" y="390" fill="#00C800">-2V</text><text x="100" y="458" fill="#00C800">-4V</text><text x="100" y="526" fill="#00C800">-6V</text><text x="100" y="593" fill="#00C800">-8V</text><text x="732" y="119" fill="#C8C800" text-anchor="end">14V</text><text x="732" y="187" fill="#C8C800" text-anchor="end">12V</text><text x="732" y="255" fill="#C8C800" text-anchor="end">10V</text><text x="732" y="322" fill="#C8C800" text-anchor="end">8V</text><text x="732" y="390" fill="#C8C800" text-anchor="end">6V</text><text x="732" y="458" fill="#C8C800" text-anchor="end">4V</text><text x="732" y="526" fill="#C8C800" text-anchor="end">2V</text><text x="732" y="593" fill="#C8C800" text-anchor="end">-3,37mV</text></g><rect x="95" y="235" width="9" height="9" fill="#00FF00"/><polyline points="95,186 123,186 126,287 260,287 263,186 387,186 390,287 525,287 528,186 651,186 654,287 736,287" fill="none" stroke="#00FF00" stroke-width="2" stroke-linejoin="miter" shape-rendering="auto"/><polyline points="95,459 104,459 108,512 125,512 128,551 232,551 234,514 237,512 264,512 268,459 370,459 373,512 391,512 393,551 496,551 500,512 528,512 531,459 633,459 637,512 655,512 658,551 736,551" fill="none" stroke="#FFFF00" stroke-width="2" stroke-linejoin="miter" shape-rendering="auto"/><rect x="122" y="179" width="2" height="7" fill="#00FF00"/><rect x="126" y="96" width="1" height="542" fill="#FF0000"/><rect x="232" y="96" width="1" height="542" fill="#0000FF"/><path d="M124.5 639 L135 649.5 L114 649.5 Z" fill="#FF0000" shape-rendering="auto"/></svg>
<div class="a" style="left:95px;top:650px;width:641px;height:17px;background:repeating-conic-gradient(#fff 0 25%,#D4D0C8 0 50%) 0 0/2px 2px"></div>
<div class="a" style="left:95px;top:650px;width:16px;height:17px;background:#D4D0C8;box-shadow:inset 1px 1px 0 #D4D0C8,inset 2px 2px 0 #fff,inset -1px -1px 0 #404040,inset -2px -2px 0 #808080"></div>
<div class="a" style="left:720px;top:650px;width:16px;height:17px;background:#D4D0C8;box-shadow:inset 1px 1px 0 #D4D0C8,inset 2px 2px 0 #fff,inset -1px -1px 0 #404040,inset -2px -2px 0 #808080"></div>
<div class="a" style="left:111px;top:650px;width:16px;height:17px;background:#D4D0C8;box-shadow:inset 1px 1px 0 #D4D0C8,inset 2px 2px 0 #fff,inset -1px -1px 0 #404040,inset -2px -2px 0 #808080"></div>
<svg class="a" style="left:95px;top:650px;" width="641" height="17" viewBox="95 650 641 17" shape-rendering="crispEdges"><path d="M100 658h1v1h-1zM101 657h1v3h-1zM102 656h1v5h-1zM103 655h1v7h-1zM726 655h1v7h-1zM727 656h1v5h-1zM728 657h1v3h-1zM729 658h1v1h-1z" fill="#000"/></svg>
<div class="a" style="left:739px;top:101px;width:80px;height:83px;border:1px solid #fff"></div>
<div class="a" style="left:738px;top:100px;width:80px;height:83px;border:1px solid #808080"></div>
<div class="t" style="left:745px;top:96.34px;padding:0 1px;background:#D4D0C8;font-size:12px;transform:scaleX(0.88);transform-origin:0 0">Input</div>
<div class="a" style="left:742px;top:114px;width:37px;height:22px;background:#D4D0C8;box-shadow:inset 1px 1px 0 #fff,inset -1px -1px 0 #404040,inset -2px -2px 0 #808080;"></div>
<div class="a" style="left:742px;top:136px;width:37px;height:22px;background:#D4D0C8;box-shadow:inset 1px 1px 0 #fff,inset -1px -1px 0 #404040,inset -2px -2px 0 #808080;"></div>
<div class="a" style="left:742px;top:158px;width:37px;height:22px;background:#D4D0C8;box-shadow:inset 1px 1px 0 #fff,inset -1px -1px 0 #404040,inset -2px -2px 0 #808080;"></div>
<div class="t" style="left:749px;top:118.55px;color:#000;font-size:8.5px;letter-spacing:-0.5px;transform-origin:0 0;">1:10</div>
<div class="a" style="left:767px;top:122px;width:7px;height:5px;background:#00FF00;border:1px solid #000"></div>
<div class="a" style="left:749px;top:143px;width:15px;height:1px;background:#000"></div>
<div class="a" style="left:749px;top:149px;width:15px;height:1px;background:#000"></div>
<div class="a" style="left:765px;top:144px;width:7px;height:5px;background:#00FF00;border:1px solid #000"></div>
<div class="a" style="left:750px;top:173px;width:13px;height:2px;background:#000"></div>
<div class="a" style="left:756px;top:164px;width:1px;height:9px;background:#000"></div>
<div class="a" style="left:765px;top:167px;width:7px;height:5px;background:#00FF00;border:1px solid #000"></div>
<div class="a" style="left:779px;top:114px;width:37px;height:22px;background:#D4D0C8;box-shadow:inset 1px 1px 0 #fff,inset -1px -1px 0 #404040,inset -2px -2px 0 #808080;"></div>
<div class="a" style="left:779px;top:136px;width:37px;height:22px;background:#D4D0C8;box-shadow:inset 1px 1px 0 #fff,inset -1px -1px 0 #404040,inset -2px -2px 0 #808080;"></div>
<div class="a" style="left:779px;top:158px;width:37px;height:22px;background:#D4D0C8;box-shadow:inset 1px 1px 0 #fff,inset -1px -1px 0 #404040,inset -2px -2px 0 #808080;"></div>
<div class="t" style="left:786px;top:118.55px;color:#000;font-size:8.5px;letter-spacing:-0.5px;transform-origin:0 0;">1:10</div>
<div class="a" style="left:804px;top:122px;width:7px;height:5px;background:#FFFF00;border:1px solid #000"></div>
<div class="a" style="left:786px;top:143px;width:15px;height:1px;background:#000"></div>
<div class="a" style="left:786px;top:149px;width:15px;height:1px;background:#000"></div>
<div class="a" style="left:802px;top:144px;width:7px;height:5px;background:#FFFF00;border:1px solid #000"></div>
<div class="a" style="left:787px;top:173px;width:13px;height:2px;background:#000"></div>
<div class="a" style="left:793px;top:164px;width:1px;height:9px;background:#000"></div>
<div class="a" style="left:802px;top:167px;width:7px;height:5px;background:#FFFF00;border:1px solid #000"></div>
<div class="a" style="left:739px;top:191px;width:80px;height:352px;border:1px solid #fff"></div>
<div class="a" style="left:738px;top:190px;width:80px;height:352px;border:1px solid #808080"></div>
<div class="t" style="left:745px;top:186.34px;padding:0 1px;background:#D4D0C8;font-size:12px;transform:scaleX(0.88);transform-origin:0 0">Position</div>
<div class="a" style="left:757px;top:204px;width:4px;height:326px;background:#808080"></div>
<div class="a" style="left:758px;top:205px;width:3px;height:324px;background:#404040"></div>
<div class="a" style="left:761px;top:204px;width:1px;height:326px;background:#fff"></div>
<div class="a" style="left:758px;top:529px;width:4px;height:1px;background:#fff"></div>
<div class="a" style="left:759px;top:205px;width:2px;height:324px;background:#00FF00"></div>
<div class="a" style="left:758px;top:330px;width:3px;height:100px;background:#000"></div>
<svg class="a" style="left:752px;top:367px;" width="16" height="11" viewBox="752 367 16 11" shape-rendering="crispEdges"><path d="M752.5 368V376L756.5 372Z" fill="#00FF00" stroke="#000" shape-rendering="auto"/><path d="M768.5 368V376L764.5 372Z" fill="#00FF00" stroke="#000" shape-rendering="auto"/><rect x="756" y="372" width="9" height="1" fill="#000"/></svg>
<div class="a" style="left:794px;top:204px;width:4px;height:326px;background:#808080"></div>
<div class="a" style="left:795px;top:205px;width:3px;height:324px;background:#404040"></div>
<div class="a" style="left:798px;top:204px;width:1px;height:326px;background:#fff"></div>
<div class="a" style="left:795px;top:529px;width:4px;height:1px;background:#fff"></div>
<div class="a" style="left:796px;top:205px;width:2px;height:324px;background:#FFFF00"></div>
<div class="a" style="left:795px;top:331px;width:3px;height:100px;background:#000"></div>
<svg class="a" style="left:789px;top:417px;" width="16" height="11" viewBox="789 417 16 11" shape-rendering="crispEdges"><path d="M789.5 418V426L793.5 422Z" fill="#FFFF00" stroke="#000" shape-rendering="auto"/><path d="M805.5 418V426L801.5 422Z" fill="#FFFF00" stroke="#000" shape-rendering="auto"/><rect x="793" y="422" width="9" height="1" fill="#000"/></svg>
<div class="a" style="left:739px;top:551px;width:80px;height:117px;border:1px solid #fff"></div>
<div class="a" style="left:738px;top:550px;width:80px;height:117px;border:1px solid #808080"></div>
<div class="t" style="left:745px;top:546.34px;padding:0 1px;background:#D4D0C8;font-size:12px;transform:scaleX(0.88);transform-origin:0 0">Vertical</div>
<div class="a" style="left:742px;top:560px;width:37px;height:22px;background:#D4D0C8;box-shadow:inset 1px 1px 0 #fff,inset -1px -1px 0 #404040,inset -2px -2px 0 #808080;"></div>
<svg class="a" style="left:747px;top:566px;" width="17" height="10" viewBox="747 566 17 10" shape-rendering="crispEdges"><path d="M747 575L755.5 566L764 575Z" fill="#000" shape-rendering="auto"/></svg>
<div class="a" style="left:768px;top:568px;width:7px;height:5px;background:#00FF00;border:1px solid #000"></div>
<div class="t" style="left:754px;top:586.34px;color:#000;font-size:12px;letter-spacing:0px;transform:scaleX(0.88);transform-origin:0 0;">2V</div>
<div class="a" style="left:742px;top:601px;width:37px;height:22px;background:#D4D0C8;box-shadow:inset 1px 1px 0 #fff,inset -1px -1px 0 #404040,inset -2px -2px 0 #808080;"></div>
<svg class="a" style="left:747px;top:608px;" width="17" height="10" viewBox="747 608 17 10" shape-rendering="crispEdges"><path d="M747 608L755.5 617L764 608Z" fill="#000" shape-rendering="auto"/></svg>
<div class="a" style="left:768px;top:610px;width:7px;height:5px;background:#00FF00;border:1px solid #000"></div>
<div class="a" style="left:742px;top:629px;width:37px;height:21px;background:#D4D0C8;box-shadow:inset 1px 1px 0 #fff,inset -1px -1px 0 #404040,inset -2px -2px 0 #808080;"></div>
<svg class="a" style="left:748px;top:631px;" width="17" height="17" viewBox="748 631 17 17" shape-rendering="crispEdges"><path d="M749 646.5L750.5 641.5L752 645L753.5 638.5L756.5 642.5L757.5 635.5L761.5 639.5L763.5 632.5M750 644L753 642.5M754 641L758 639M758 638L762 636" fill="none" stroke="#000" stroke-width="1.2" shape-rendering="auto"/></svg>
<div class="a" style="left:765px;top:637px;width:7px;height:5px;background:#00FF00;border:1px solid #000"></div>
<div class="a" style="left:742px;top:651px;width:11px;height:13px;background:#D4D0C8;box-shadow:inset 1px 1px 0 #fff,inset -1px -1px 0 #404040,inset -2px -2px 0 #808080;"></div>
<div class="a" style="left:768px;top:651px;width:11px;height:13px;background:#D4D0C8;box-shadow:inset 1px 1px 0 #fff,inset -1px -1px 0 #404040,inset -2px -2px 0 #808080;"></div>
<svg class="a" style="left:742px;top:651px;" width="37" height="13" viewBox="742 651 37 13" shape-rendering="crispEdges"><path d="M749 653.5v8l-4-4z" fill="#808080" shape-rendering="auto"/><path d="M772 653.5v8l4-4z" fill="#808080" shape-rendering="auto"/><path d="M773 661.5l3-3" stroke="#fff" shape-rendering="auto"/></svg>
<div class="t" style="left:758px;top:651.34px;color:#000;font-size:12px;letter-spacing:0px;transform-origin:0 0;">4</div>
<div class="a" style="left:779px;top:560px;width:37px;height:22px;background:#D4D0C8;box-shadow:inset 1px 1px 0 #fff,inset -1px -1px 0 #404040,inset -2px -2px 0 #808080;"></div>
<svg class="a" style="left:784px;top:566px;" width="17" height="10" viewBox="784 566 17 10" shape-rendering="crispEdges"><path d="M784 575L792.5 566L801 575Z" fill="#000" shape-rendering="auto"/></svg>
<div class="a" style="left:805px;top:568px;width:7px;height:5px;background:#FFFF00;border:1px solid #000"></div>
<div class="t" style="left:791px;top:586.34px;color:#000;font-size:12px;letter-spacing:0px;transform:scaleX(0.88);transform-origin:0 0;">2V</div>
<div class="a" style="left:779px;top:601px;width:37px;height:22px;background:#D4D0C8;box-shadow:inset 1px 1px 0 #fff,inset -1px -1px 0 #404040,inset -2px -2px 0 #808080;"></div>
<svg class="a" style="left:784px;top:608px;" width="17" height="10" viewBox="784 608 17 10" shape-rendering="crispEdges"><path d="M784 608L792.5 617L801 608Z" fill="#000" shape-rendering="auto"/></svg>
<div class="a" style="left:805px;top:610px;width:7px;height:5px;background:#FFFF00;border:1px solid #000"></div>
<div class="a" style="left:779px;top:629px;width:37px;height:21px;background:#D4D0C8;box-shadow:inset 1px 1px 0 #fff,inset -1px -1px 0 #404040,inset -2px -2px 0 #808080;"></div>
<svg class="a" style="left:785px;top:631px;" width="17" height="17" viewBox="785 631 17 17" shape-rendering="crispEdges"><path d="M786 646.5L787.5 641.5L789 645L790.5 638.5L793.5 642.5L794.5 635.5L798.5 639.5L800.5 632.5M787 644L790 642.5M791 641L795 639M795 638L799 636" fill="none" stroke="#000" stroke-width="1.2" shape-rendering="auto"/></svg>
<div class="a" style="left:802px;top:637px;width:7px;height:5px;background:#FFFF00;border:1px solid #000"></div>
<div class="a" style="left:779px;top:651px;width:11px;height:13px;background:#D4D0C8;box-shadow:inset 1px 1px 0 #fff,inset -1px -1px 0 #404040,inset -2px -2px 0 #808080;"></div>
<div class="a" style="left:805px;top:651px;width:11px;height:13px;background:#D4D0C8;box-shadow:inset 1px 1px 0 #fff,inset -1px -1px 0 #404040,inset -2px -2px 0 #808080;"></div>
<svg class="a" style="left:779px;top:651px;" width="37" height="13" viewBox="779 651 37 13" shape-rendering="crispEdges"><path d="M786 653.5v8l-4-4z" fill="#808080" shape-rendering="auto"/><path d="M809 653.5v8l4-4z" fill="#808080" shape-rendering="auto"/><path d="M810 661.5l3-3" stroke="#fff" shape-rendering="auto"/></svg>
<div class="t" style="left:795px;top:651.34px;color:#000;font-size:12px;letter-spacing:0px;transform-origin:0 0;">4</div>
<div class="a" style="left:107px;top:674px;width:128px;height:144px;border:1px solid #fff"></div>
<div class="a" style="left:106px;top:673px;width:128px;height:144px;border:1px solid #808080"></div>
<div class="t" style="left:113px;top:669.34px;padding:0 1px;background:#D4D0C8;font-size:12px;transform:scaleX(0.88);transform-origin:0 0">Save/load</div>
<svg class="a" style="left:109.5px;top:689.5px" width="12" height="12"><circle cx="6" cy="6" r="5" fill="none" stroke="#000" stroke-width="1.1"/></svg>
<div class="a" style="left:122px;top:685px;width:108px;height:22px;background:#fff;box-shadow:inset 1px 1px 0 #808080,inset 2px 2px 0 #404040,inset -1px -1px 0 #fff,inset -2px -2px 0 #D4D0C8"></div>
<div class="a" style="left:215px;top:686px;width:14px;height:20px;background:#D4D0C8;box-shadow:inset 1px 1px 0 #fff,inset -1px -1px 0 #404040,inset -2px -2px 0 #808080;"></div>
<div class="a" style="left:219px;top:691px;width:6px;height:1px;background:#000"></div>
<div class="a" style="left:219px;top:694px;width:6px;height:1px;background:#000"></div>
<div class="a" style="left:219px;top:697px;width:6px;height:1px;background:#000"></div>
<div class="a" style="left:219px;top:700px;width:6px;height:1px;background:#000"></div>
<div class="a" style="left:139px;top:707px;width:45px;height:23px;background:#D4D0C8;box-shadow:inset 1px 1px 0 #fff,inset -1px -1px 0 #404040,inset -2px -2px 0 #808080;"></div>
<div class="a" style="left:184px;top:707px;width:45px;height:23px;background:#D4D0C8;box-shadow:inset 1px 1px 0 #fff,inset -1px -1px 0 #404040,inset -2px -2px 0 #808080;"></div>
<div class="t" style="left:146px;top:715.34px;color:#fff;font-size:12px;letter-spacing:0px;transform:scaleX(0.88);transform-origin:0 0;">Unload</div>
<div class="t" style="left:145px;top:714.34px;color:#808080;font-size:12px;letter-spacing:0px;transform:scaleX(0.88);transform-origin:0 0;">Unload</div>
<div class="t" style="left:194px;top:714.34px;color:#000;font-size:12px;letter-spacing:0px;transform:scaleX(0.88);transform-origin:0 0;">Load</div>
<svg class="a" style="left:141.5px;top:735.5px" width="12" height="12"><circle cx="6" cy="6" r="5" fill="none" stroke="#000" stroke-width="1.1"/></svg>
<div class="a" style="left:156px;top:731px;width:73px;height:22px;background:#D4D0C8;box-shadow:inset 1px 1px 0 #fff,inset -1px -1px 0 #404040,inset -2px -2px 0 #808080;"></div>
<div class="t" style="left:160px;top:737.34px;color:#fff;font-size:12px;letter-spacing:0px;transform:scaleX(0.88);transform-origin:0 0;">Apply settings</div>
<div class="t" style="left:159px;top:736.34px;color:#808080;font-size:12px;letter-spacing:0px;transform:scaleX(0.88);transform-origin:0 0;">Apply settings</div>
<div class="a" style="left:114px;top:769px;width:13px;height:13px;box-shadow:inset 1px 1px 0 #808080,inset 2px 2px 0 #404040,inset -1px -1px 0 #fff"></div>
<div class="t" style="left:132px;top:771.34px;color:#fff;font-size:12px;letter-spacing:0px;transform:scaleX(0.88);transform-origin:0 0;">Autosave</div>
<div class="t" style="left:131px;top:770.34px;color:#808080;font-size:12px;letter-spacing:0px;transform:scaleX(0.88);transform-origin:0 0;">Autosave</div>
<div class="a" style="left:184px;top:765px;width:45px;height:21px;background:#D4D0C8;box-shadow:inset 1px 1px 0 #fff,inset -1px -1px 0 #404040,inset -2px -2px 0 #808080;"></div>
<div class="t" style="left:194px;top:770.34px;color:#000;font-size:12px;letter-spacing:0px;transform:scaleX(0.88);transform-origin:0 0;">Save</div>
<svg class="a" style="left:109.5px;top:791px" width="12" height="12"><circle cx="6" cy="6" r="5" fill="none" stroke="#000" stroke-width="1.1"/></svg>
<div class="a" style="left:122px;top:787px;width:108px;height:22px;background:#fff;box-shadow:inset 1px 1px 0 #808080,inset 2px 2px 0 #404040,inset -1px -1px 0 #fff,inset -2px -2px 0 #D4D0C8"></div>
<div class="a" style="left:215px;top:788px;width:14px;height:20px;background:#D4D0C8;box-shadow:inset 1px 1px 0 #fff,inset -1px -1px 0 #404040,inset -2px -2px 0 #808080;"></div>
<div class="a" style="left:219px;top:793px;width:6px;height:1px;background:#000"></div>
<div class="a" style="left:219px;top:796px;width:6px;height:1px;background:#000"></div>
<div class="a" style="left:219px;top:799px;width:6px;height:1px;background:#000"></div>
<div class="a" style="left:219px;top:802px;width:6px;height:1px;background:#000"></div>
<div class="a" style="left:238px;top:674px;width:79px;height:144px;border:1px solid #fff"></div>
<div class="a" style="left:237px;top:673px;width:79px;height:144px;border:1px solid #808080"></div>
<div class="t" style="left:242px;top:669.34px;padding:0 1px;background:#D4D0C8;font-size:12px;transform:scaleX(0.88);transform-origin:0 0">Zoom</div>
<div class="a" style="left:239px;top:683px;width:60px;height:24px;background:repeating-conic-gradient(#fff 0 25%,#D4D0C8 0 50%) 0 0/2px 2px;box-shadow:inset 1px 1px 0 #808080,inset 2px 2px 0 #404040,inset -1px -1px 0 #fff"></div>
<div class="t" style="right:539px;top:690.34px;color:#000;font-size:12px;letter-spacing:0px;transform:scaleX(0.88);transform-origin:100% 0;">1:32</div>
<svg class="a" style="left:289px;top:692px" width="6" height="6" shape-rendering="crispEdges"><path d="M1 0h4v1h1v4h-1v1h-4v-1h-1v-4h1z" fill="#000"/><rect x="1" y="1" width="4" height="4" fill="#A0E000"/></svg>
<div class="a" style="left:299px;top:683px;width:15px;height:12px;background:#D4D0C8;box-shadow:inset 1px 1px 0 #fff,inset -1px -1px 0 #404040,inset -2px -2px 0 #808080;"></div>
<div class="a" style="left:299px;top:695px;width:15px;height:13px;background:#D4D0C8;box-shadow:inset 1px 1px 0 #fff,inset -1px -1px 0 #404040,inset -2px -2px 0 #808080;"></div>
<svg class="a" style="left:304px;top:688px;" width="5" height="3" viewBox="304 688 5 3" shape-rendering="crispEdges"><path d="M304 690.5h5l-2.5-2.5z" fill="#000" shape-rendering="auto"/></svg>
<svg class="a" style="left:304px;top:700px;" width="5" height="3" viewBox="304 700 5 3" shape-rendering="crispEdges"><path d="M304 700h5l-2.5 2.5z" fill="#000" shape-rendering="auto"/></svg>
<div class="t" style="left:239px;top:710.34px;color:#000;font-size:12px;letter-spacing:0px;transform:scaleX(0.88);transform-origin:0 0;">Dsp:&nbsp;&nbsp; 16k</div>
<div class="a" style="left:239px;top:730px;width:75px;height:20px;background:#D4D0C8;box-shadow:inset 1px 1px 0 #fff,inset -1px -1px 0 #404040,inset -2px -2px 0 #808080;"></div>
<div class="t" style="right:526px;top:735.34px;color:#000;font-size:12px;letter-spacing:0px;transform:scaleX(0.88);transform-origin:100% 0;">Auto</div>
<svg class="a" style="left:303px;top:740px" width="6" height="6" shape-rendering="crispEdges"><path d="M1 0h4v1h1v4h-1v1h-4v-1h-1v-4h1z" fill="#000"/><rect x="1" y="1" width="4" height="4" fill="#E84400"/></svg>
<div class="a" style="left:239px;top:751px;width:25px;height:21px;background:#D4D0C8;box-shadow:inset 1px 1px 0 #fff,inset -1px -1px 0 #404040,inset -2px -2px 0 #808080;"></div>
<div class="a" style="left:264px;top:751px;width:24px;height:21px;background:repeating-conic-gradient(#fff 0 25%,#D4D0C8 0 50%) 0 0/2px 2px;box-shadow:inset 1px 1px 0 #404040,inset 2px 2px 0 #808080,inset -1px -1px 0 #fff;"></div>
<div class="a" style="left:288px;top:751px;width:26px;height:21px;background:#D4D0C8;box-shadow:inset 1px 1px 0 #fff,inset -1px -1px 0 #404040,inset -2px -2px 0 #808080;"></div>
<svg class="a" style="left:244px;top:753px;" width="12" height="17" viewBox="244 753 12 17" shape-rendering="crispEdges"><path d="M250 753.5V764.5M245 768.5L250 764.5L255 768.5" stroke="#000" stroke-width="2" fill="none" shape-rendering="auto"/></svg>
<svg class="a" style="left:255px;top:761px" width="6" height="6" shape-rendering="crispEdges"><path d="M1 0h4v1h1v4h-1v1h-4v-1h-1v-4h1z" fill="#000"/><rect x="1" y="1" width="4" height="4" fill="#E84400"/></svg>
<svg class="a" style="left:271px;top:755px;" width="10" height="15" viewBox="271 755 10 15" shape-rendering="crispEdges"><path d="M276 755V769.5M272 764.5L276 763.5L279 761.5" stroke="#000" stroke-width="2" fill="none" shape-rendering="auto"/></svg>
<svg class="a" style="left:282px;top:757px" width="6" height="6" shape-rendering="crispEdges"><path d="M1 0h4v1h1v4h-1v1h-4v-1h-1v-4h1z" fill="#000"/><rect x="1" y="1" width="4" height="4" fill="#A0E000"/></svg>
<svg class="a" style="left:294px;top:753px;" width="12" height="17" viewBox="294 753 12 17" shape-rendering="crispEdges"><path d="M300.5 769V760M295.5 754.5L300.5 759.5L305.5 754.5" stroke="#000" stroke-width="2" fill="none" shape-rendering="auto"/></svg>
<svg class="a" style="left:305px;top:761px" width="6" height="6" shape-rendering="crispEdges"><path d="M1 0h4v1h1v4h-1v1h-4v-1h-1v-4h1z" fill="#000"/><rect x="1" y="1" width="4" height="4" fill="#E84400"/></svg>
<div class="a" style="left:239px;top:781px;width:74px;height:1px;background:#808080"></div>
<div class="a" style="left:239px;top:781px;width:1px;height:17px;background:#808080"></div>
<div class="a" style="left:239px;top:798px;width:75px;height:1px;background:#fff"></div>
<div class="a" style="left:313px;top:781px;width:1px;height:18px;background:#fff"></div>
<div class="a" style="left:240px;top:782px;width:73px;height:16px;background:repeating-conic-gradient(#fff 0 25%,#D4D0C8 0 50%) 0 0/2px 2px"></div>
<div class="a" style="left:240px;top:782px;width:16px;height:16px;background:#D4D0C8;box-shadow:inset 1px 1px 0 #D4D0C8,inset 2px 2px 0 #fff,inset -1px -1px 0 #404040,inset -2px -2px 0 #808080"></div>
<div class="a" style="left:297px;top:782px;width:16px;height:16px;background:#D4D0C8;box-shadow:inset 1px 1px 0 #D4D0C8,inset 2px 2px 0 #fff,inset -1px -1px 0 #404040,inset -2px -2px 0 #808080"></div>
<div class="a" style="left:281px;top:782px;width:16px;height:16px;background:#D4D0C8;box-shadow:inset 1px 1px 0 #D4D0C8,inset 2px 2px 0 #fff,inset -1px -1px 0 #404040,inset -2px -2px 0 #808080"></div>
<svg class="a" style="left:240px;top:782px;" width="73" height="16" viewBox="240 782 73 16" shape-rendering="crispEdges"><path d="M245 789h1v1h-1zM246 788h1v3h-1zM247 787h1v5h-1zM248 786h1v7h-1zM303 786h1v7h-1zM304 787h1v5h-1zM305 788h1v3h-1zM306 789h1v1h-1z" fill="#000"/></svg>
<div class="t" style="left:240px;top:800.34px;color:#000;font-size:12px;letter-spacing:0px;transform:scaleX(0.88);transform-origin:0 0;">Mem: 32K</div>
<div class="a" style="left:320px;top:674px;width:103px;height:144px;border:1px solid #fff"></div>
<div class="a" style="left:319px;top:673px;width:103px;height:144px;border:1px solid #808080"></div>
<div class="t" style="left:325px;top:669.34px;padding:0 1px;background:#D4D0C8;font-size:12px;transform:scaleX(0.88);transform-origin:0 0">Horizontal</div>
<div class="a" style="left:322px;top:686px;width:2px;height:11px;background:#000"></div>
<div class="a" style="left:326px;top:686px;width:2px;height:11px;background:#000"></div>
<div class="a" style="left:329px;top:686px;width:2px;height:11px;background:#000"></div>
<div class="a" style="left:333px;top:686px;width:2px;height:11px;background:#000"></div>
<div class="t" style="left:341px;top:686.34px;color:#000;font-size:12px;letter-spacing:0px;transform:scaleX(0.88);transform-origin:0 0;">16us/d</div>
<svg class="a" style="left:322px;top:700px;" width="14" height="11" viewBox="322 700 14 11" shape-rendering="crispEdges"><path d="M323 705.5H330" stroke="#000" fill="none"/><path d="M329 702L332.5 705.5L329 709Z" fill="#000" shape-rendering="auto"/><rect x="333" y="700" width="2" height="11" fill="#000"/></svg>
<div class="t" style="left:341px;top:700.34px;color:#000;font-size:12px;letter-spacing:0px;transform:scaleX(0.88);transform-origin:0 0;">200ns</div>
<svg class="a" style="left:322px;top:714px;" width="14" height="11" viewBox="322 714 14 11" shape-rendering="crispEdges"><rect x="322" y="714" width="2" height="11" fill="#000"/><rect x="333" y="714" width="2" height="11" fill="#000"/><path d="M326 719.5H331" stroke="#000" fill="none"/><path d="M327.5 716.5L324 719.5L327.5 722.5Z M329.5 716.5L333 719.5L329.5 722.5Z" fill="#000" shape-rendering="auto"/></svg>
<svg class="a" style="left:322px;top:728px;" width="14" height="11" viewBox="322 728 14 11" shape-rendering="crispEdges"><rect x="322" y="728" width="2" height="11" fill="#000"/><rect x="333" y="728" width="2" height="11" fill="#000"/><path d="M326 733.5H331" stroke="#000" fill="none"/><path d="M327.5 730.5L324 733.5L327.5 736.5Z M329.5 730.5L333 733.5L329.5 736.5Z" fill="#000" shape-rendering="auto"/></svg>
<div class="t" style="left:341px;top:714.34px;color:#000;font-size:12px;letter-spacing:0px;transform:scaleX(0.88);transform-origin:0 0;">26,56us</div>
<div class="t" style="left:341px;top:728.34px;color:#000;font-size:12px;letter-spacing:0px;transform:scaleX(0.88);transform-origin:0 0;">37,651kHz</div>
<div class="a" style="left:323px;top:748px;width:97px;height:1px;background:#808080"></div>
<div class="a" style="left:323px;top:749px;width:97px;height:1px;background:#fff"></div>
<div class="a" style="left:322px;top:757px;width:2px;height:11px;background:#000"></div>
<div class="a" style="left:326px;top:757px;width:2px;height:11px;background:#000"></div>
<div class="a" style="left:329px;top:757px;width:2px;height:11px;background:#000"></div>
<div class="a" style="left:333px;top:757px;width:2px;height:11px;background:#000"></div>
<div class="t" style="left:341px;top:757.34px;color:#000;font-size:12px;letter-spacing:0px;transform:scaleX(0.88);transform-origin:0 0;">16us/d</div>
<svg class="a" style="left:322px;top:772px;" width="14" height="9" viewBox="322 772 14 9" shape-rendering="crispEdges"><rect x="322" y="775" width="3" height="3" fill="#000"/><rect x="332" y="775" width="3" height="3" fill="#000"/><path d="M325 776.5H332M327 774L325 776.5L327 779M330 774L332 776.5L330 779" stroke="#000" fill="none" shape-rendering="auto"/></svg>
<div class="t" style="left:341px;top:771.34px;color:#000;font-size:12px;letter-spacing:0px;transform:scaleX(0.88);transform-origin:0 0;">100MS/s</div>
<div class="a" style="left:321px;top:786px;width:98px;height:1px;background:#808080"></div>
<div class="a" style="left:321px;top:786px;width:1px;height:17px;background:#808080"></div>
<div class="a" style="left:321px;top:803px;width:99px;height:1px;background:#fff"></div>
<div class="a" style="left:419px;top:786px;width:1px;height:18px;background:#fff"></div>
<div class="a" style="left:322px;top:787px;width:97px;height:16px;background:repeating-conic-gradient(#fff 0 25%,#D4D0C8 0 50%) 0 0/2px 2px"></div>
<div class="a" style="left:322px;top:787px;width:16px;height:16px;background:#D4D0C8;box-shadow:inset 1px 1px 0 #D4D0C8,inset 2px 2px 0 #fff,inset -1px -1px 0 #404040,inset -2px -2px 0 #808080"></div>
<div class="a" style="left:403px;top:787px;width:16px;height:16px;background:#D4D0C8;box-shadow:inset 1px 1px 0 #D4D0C8,inset 2px 2px 0 #fff,inset -1px -1px 0 #404040,inset -2px -2px 0 #808080"></div>
<div class="a" style="left:368px;top:787px;width:16px;height:16px;background:#D4D0C8;box-shadow:inset 1px 1px 0 #D4D0C8,inset 2px 2px 0 #fff,inset -1px -1px 0 #404040,inset -2px -2px 0 #808080"></div>
<svg class="a" style="left:322px;top:787px;" width="97" height="16" viewBox="322 787 97 16" shape-rendering="crispEdges"><path d="M327 794h1v1h-1zM328 793h1v3h-1zM329 792h1v5h-1zM330 791h1v7h-1zM409 791h1v7h-1zM410 792h1v5h-1zM411 793h1v3h-1zM412 794h1v1h-1z" fill="#000"/></svg>
<div class="a" style="left:336px;top:804px;width:2px;height:9px;background:#808080"></div>
<div class="a" style="left:358px;top:804px;width:2px;height:9px;background:#808080"></div>
<div class="a" style="left:380px;top:804px;width:2px;height:9px;background:#808080"></div>
<div class="a" style="left:402px;top:804px;width:2px;height:9px;background:#808080"></div>
<div class="a" style="left:426px;top:674px;width:87px;height:144px;border:1px solid #fff"></div>
<div class="a" style="left:425px;top:673px;width:87px;height:144px;border:1px solid #808080"></div>
<div class="t" style="left:431px;top:669.34px;padding:0 1px;background:#D4D0C8;font-size:12px;transform:scaleX(0.88);transform-origin:0 0">Trigger mode</div>
<div class="a" style="left:427px;top:692px;width:54px;height:21px;background:#D4D0C8;box-shadow:inset 1px 1px 0 #fff,inset -1px -1px 0 #404040,inset -2px -2px 0 #808080;"></div>
<div class="t" style="left:438px;top:697.34px;color:#000;font-size:12px;letter-spacing:0px;transform:scaleX(0.88);transform-origin:0 0;">Normal</div>
<div class="a" style="left:482px;top:692px;width:28px;height:21px;background:#D4D0C8;box-shadow:inset 1px 1px 0 #fff,inset -1px -1px 0 #404040,inset -2px -2px 0 #808080;"></div>
<svg class="a" style="left:485px;top:695px;" width="22" height="16" viewBox="485 695 22 16" shape-rendering="crispEdges"><path d="M486 703L489 701L491 699.5L493 699L495 697.5L499.5 702L497 704L495 705L493 708.5L489.5 706L487.5 704.5Z" fill="#00FF00" stroke="#000" stroke-width="1" shape-rendering="auto"/><path d="M499 702L505.5 707.5" stroke="#000" stroke-width="1" shape-rendering="auto"/></svg>
<div class="a" style="left:427px;top:715px;width:54px;height:22px;background:#D4D0C8;box-shadow:inset 1px 1px 0 #fff,inset -1px -1px 0 #404040,inset -2px -2px 0 #808080;"></div>
<svg class="a" style="left:434px;top:720px" width="12" height="12"><circle cx="6" cy="6" r="5.3" fill="#00E000" stroke="#000" stroke-width="0.8"/></svg>
<div class="t" style="left:451px;top:721.34px;color:#000;font-size:12px;letter-spacing:0px;transform:scaleX(0.88);transform-origin:0 0;">TGD</div>
<div class="a" style="left:482px;top:715px;width:28px;height:22px;background:#D4D0C8;box-shadow:inset 1px 1px 0 #fff,inset -1px -1px 0 #404040,inset -2px -2px 0 #808080;"></div>
<div class="t" style="left:488px;top:721.34px;color:#000;font-size:12px;letter-spacing:0px;transform:scaleX(0.88);transform-origin:0 0;">1/2</div>
<div class="a" style="left:427px;top:742px;width:54px;height:22px;background:#D4D0C8;box-shadow:inset 1px 1px 0 #fff,inset -1px -1px 0 #404040,inset -2px -2px 0 #808080;"></div>
<div class="t" style="left:441px;top:747.34px;color:#000;font-size:12px;letter-spacing:0px;transform:scaleX(0.88);transform-origin:0 0;">Hold</div>
<svg class="a" style="left:471px;top:752px" width="6" height="6" shape-rendering="crispEdges"><path d="M1 0h4v1h1v4h-1v1h-4v-1h-1v-4h1z" fill="#000"/><rect x="1" y="1" width="4" height="4" fill="#E84400"/></svg>
<div class="a" style="left:427px;top:776px;width:84px;height:1px;background:#808080"></div>
<div class="a" style="left:427px;top:777px;width:84px;height:1px;background:#fff"></div>
<div class="a" style="left:427px;top:785px;width:54px;height:22px;background:#D4D0C8;box-shadow:inset 1px 1px 0 #fff,inset -1px -1px 0 #404040,inset -2px -2px 0 #808080;"></div>
<div class="t" style="left:433px;top:791.34px;color:#000;font-size:12px;letter-spacing:0px;transform:scaleX(0.88);transform-origin:0 0;">Simple</div>
<svg class="a" style="left:471px;top:795px" width="6" height="6" shape-rendering="crispEdges"><path d="M1 0h4v1h1v4h-1v1h-4v-1h-1v-4h1z" fill="#000"/><rect x="1" y="1" width="4" height="4" fill="#E84400"/></svg>
<div class="a" style="left:516px;top:674px;width:291px;height:144px;border:1px solid #fff"></div>
<div class="a" style="left:515px;top:673px;width:291px;height:144px;border:1px solid #808080"></div>
<div class="t" style="left:521px;top:669.34px;padding:0 1px;background:#D4D0C8;font-size:12px;transform:scaleX(0.88);transform-origin:0 0">Trigger</div>
<div class="t" style="left:540px;top:686.34px;color:#000;font-size:12px;letter-spacing:0px;transform:scaleX(0.88);transform-origin:0 0;">Primary</div>
<div class="a" style="left:518px;top:701px;width:39px;height:19px;background:repeating-conic-gradient(#fff 0 25%,#D4D0C8 0 50%) 0 0/2px 2px;box-shadow:inset 1px 1px 0 #404040,inset 2px 2px 0 #808080,inset -1px -1px 0 #fff;"></div>
<div class="t" style="left:534px;top:707.34px;color:#000;font-size:12px;letter-spacing:0px;transform:scaleX(0.88);transform-origin:0 0;">A</div>
<svg class="a" style="left:548px;top:708px" width="6" height="6" shape-rendering="crispEdges"><path d="M1 0h4v1h1v4h-1v1h-4v-1h-1v-4h1z" fill="#000"/><rect x="1" y="1" width="4" height="4" fill="#A0E000"/></svg>
<div class="a" style="left:557px;top:701px;width:41px;height:19px;background:#D4D0C8;box-shadow:inset 1px 1px 0 #fff,inset -1px -1px 0 #404040,inset -2px -2px 0 #808080;"></div>
<svg class="a" style="left:567px;top:701px;" width="16" height="19" viewBox="567 701 16 19" shape-rendering="crispEdges"><path d="M567 703.5H574.5V716.5H582" stroke="#000" stroke-width="2" fill="none"/></svg>
<div class="a" style="left:583px;top:708px;width:8px;height:5px;background:#00FF00;border:1px solid #000"></div>
<div class="a" style="left:518px;top:720px;width:39px;height:19px;background:#D4D0C8;box-shadow:inset 1px 1px 0 #fff,inset -1px -1px 0 #404040,inset -2px -2px 0 #808080;"></div>
<div class="t" style="left:534px;top:725.34px;color:#000;font-size:12px;letter-spacing:0px;transform:scaleX(0.88);transform-origin:0 0;">B</div>
<svg class="a" style="left:547px;top:728px" width="6" height="6" shape-rendering="crispEdges"><path d="M1 0h4v1h1v4h-1v1h-4v-1h-1v-4h1z" fill="#000"/><rect x="1" y="1" width="4" height="4" fill="#E84400"/></svg>
<div class="a" style="left:557px;top:720px;width:41px;height:19px;background:#D4D0C8;box-shadow:inset 1px 1px 0 #fff,inset -1px -1px 0 #404040,inset -2px -2px 0 #808080;"></div>
<svg class="a" style="left:567px;top:720px;" width="16" height="19" viewBox="567 720 16 19" shape-rendering="crispEdges"><path d="M567 735.5H574.5V722.5H582" stroke="#808080" stroke-width="1" fill="none"/></svg>
<div class="a" style="left:583px;top:727px;width:8px;height:5px;border:1px solid #808080"></div>
<div class="a" style="left:518px;top:739px;width:39px;height:20px;background:#D4D0C8;box-shadow:inset 1px 1px 0 #fff,inset -1px -1px 0 #404040,inset -2px -2px 0 #808080;"></div>
<div class="t" style="left:534px;top:744.34px;color:#000;font-size:12px;letter-spacing:0px;transform:scaleX(0.88);transform-origin:0 0;">E</div>
<svg class="a" style="left:547px;top:747px" width="6" height="6" shape-rendering="crispEdges"><path d="M1 0h4v1h1v4h-1v1h-4v-1h-1v-4h1z" fill="#000"/><rect x="1" y="1" width="4" height="4" fill="#E84400"/></svg>
<div class="a" style="left:557px;top:739px;width:41px;height:20px;background:#D4D0C8;box-shadow:inset 1px 1px 0 #fff,inset -1px -1px 0 #404040,inset -2px -2px 0 #808080;"></div>
<svg class="a" style="left:567px;top:739px;" width="16" height="20" viewBox="567 739 16 20" shape-rendering="crispEdges"><path d="M567 741.5H574.5V754.5H582" stroke="#808080" stroke-width="1" fill="none"/></svg>
<div class="a" style="left:583px;top:746px;width:8px;height:5px;border:1px solid #808080"></div>
<div class="t" style="left:614px;top:686.34px;color:#000;font-size:12px;letter-spacing:0px;transform:scaleX(0.88);transform-origin:0 0;">Secondary</div>
<div class="a" style="left:601px;top:701px;width:39px;height:19px;background:#D4D0C8;box-shadow:inset 1px 1px 0 #fff,inset -1px -1px 0 #404040,inset -2px -2px 0 #808080;"></div>
<div class="t" style="left:617px;top:706.34px;color:#000;font-size:12px;letter-spacing:0px;transform:scaleX(0.88);transform-origin:0 0;">A</div>
<svg class="a" style="left:630px;top:709px" width="6" height="6" shape-rendering="crispEdges"><path d="M1 0h4v1h1v4h-1v1h-4v-1h-1v-4h1z" fill="#000"/><rect x="1" y="1" width="4" height="4" fill="#E84400"/></svg>
<div class="a" style="left:640px;top:701px;width:41px;height:19px;background:#D4D0C8;box-shadow:inset 1px 1px 0 #fff,inset -1px -1px 0 #404040,inset -2px -2px 0 #808080;"></div>
<svg class="a" style="left:650px;top:701px;" width="16" height="19" viewBox="650 701 16 19" shape-rendering="crispEdges"><path d="M650 703.5H657.5V716.5H665" stroke="#808080" stroke-width="1" fill="none"/></svg>
<div class="a" style="left:666px;top:708px;width:8px;height:5px;border:1px solid #808080"></div>
<div class="a" style="left:601px;top:720px;width:39px;height:19px;background:#D4D0C8;box-shadow:inset 1px 1px 0 #fff,inset -1px -1px 0 #404040,inset -2px -2px 0 #808080;"></div>
<div class="t" style="left:617px;top:725.34px;color:#000;font-size:12px;letter-spacing:0px;transform:scaleX(0.88);transform-origin:0 0;">B</div>
<svg class="a" style="left:630px;top:728px" width="6" height="6" shape-rendering="crispEdges"><path d="M1 0h4v1h1v4h-1v1h-4v-1h-1v-4h1z" fill="#000"/><rect x="1" y="1" width="4" height="4" fill="#E84400"/></svg>
<div class="a" style="left:640px;top:720px;width:41px;height:19px;background:#D4D0C8;box-shadow:inset 1px 1px 0 #fff,inset -1px -1px 0 #404040,inset -2px -2px 0 #808080;"></div>
<svg class="a" style="left:650px;top:720px;" width="16" height="19" viewBox="650 720 16 19" shape-rendering="crispEdges"><path d="M650 735.5H657.5V722.5H665" stroke="#808080" stroke-width="1" fill="none"/></svg>
<div class="a" style="left:666px;top:727px;width:8px;height:5px;border:1px solid #808080"></div>
<div class="a" style="left:601px;top:739px;width:39px;height:20px;background:#D4D0C8;box-shadow:inset 1px 1px 0 #fff,inset -1px -1px 0 #404040,inset -2px -2px 0 #808080;"></div>
<div class="t" style="left:617px;top:744.34px;color:#000;font-size:12px;letter-spacing:0px;transform:scaleX(0.88);transform-origin:0 0;">E</div>
<svg class="a" style="left:630px;top:747px" width="6" height="6" shape-rendering="crispEdges"><path d="M1 0h4v1h1v4h-1v1h-4v-1h-1v-4h1z" fill="#000"/><rect x="1" y="1" width="4" height="4" fill="#E84400"/></svg>
<div class="a" style="left:640px;top:739px;width:41px;height:20px;background:#D4D0C8;box-shadow:inset 1px 1px 0 #fff,inset -1px -1px 0 #404040,inset -2px -2px 0 #808080;"></div>
<svg class="a" style="left:650px;top:739px;" width="16" height="20" viewBox="650 739 16 20" shape-rendering="crispEdges"><path d="M650 741.5H657.5V754.5H665" stroke="#808080" stroke-width="1" fill="none"/></svg>
<div class="a" style="left:666px;top:746px;width:8px;height:5px;border:1px solid #808080"></div>
<div class="t" style="left:519px;top:768.34px;color:#000;font-size:12px;letter-spacing:0px;transform:scaleX(0.88);transform-origin:0 0;">PFL</div>
<div class="a" style="left:541px;top:764px;width:46px;height:21px;background:#fff;box-shadow:inset 1px 1px 0 #808080,inset 2px 2px 0 #404040,inset -1px -1px 0 #fff,inset -2px -2px 0 #D4D0C8"></div>
<div class="t" style="right:240px;top:768.34px;color:#000;font-size:12px;letter-spacing:0px;transform:scaleX(0.88);transform-origin:100% 0;">0s</div>
<div class="a" style="left:587px;top:764px;width:11px;height:10px;background:#D4D0C8;box-shadow:inset 1px 1px 0 #fff,inset -1px -1px 0 #404040,inset -2px -2px 0 #808080;"></div>
<div class="a" style="left:587px;top:774px;width:11px;height:11px;background:#D4D0C8;box-shadow:inset 1px 1px 0 #fff,inset -1px -1px 0 #404040,inset -2px -2px 0 #808080;"></div>
<svg class="a" style="left:590px;top:767px;" width="5" height="3" viewBox="590 767 5 3" shape-rendering="crispEdges"><path d="M590 769.5h5l-2.5-2.5z" fill="#000" shape-rendering="auto"/></svg>
<svg class="a" style="left:590px;top:779px;" width="5" height="3" viewBox="590 779 5 3" shape-rendering="crispEdges"><path d="M590 779h5l-2.5 2.5z" fill="#000" shape-rendering="auto"/></svg>
<div class="t" style="left:519px;top:791.34px;color:#000;font-size:12px;letter-spacing:0px;transform:scaleX(0.88);transform-origin:0 0;">NOP</div>
<div class="a" style="left:549px;top:786px;width:38px;height:21px;background:#fff;box-shadow:inset 1px 1px 0 #808080,inset 2px 2px 0 #404040,inset -1px -1px 0 #fff,inset -2px -2px 0 #D4D0C8"></div>
<div class="t" style="right:240px;top:791.34px;color:#000;font-size:12px;letter-spacing:0px;transform:scaleX(0.88);transform-origin:100% 0;">1</div>
<div class="a" style="left:587px;top:786px;width:11px;height:10px;background:#D4D0C8;box-shadow:inset 1px 1px 0 #fff,inset -1px -1px 0 #404040,inset -2px -2px 0 #808080;"></div>
<div class="a" style="left:587px;top:796px;width:11px;height:11px;background:#D4D0C8;box-shadow:inset 1px 1px 0 #fff,inset -1px -1px 0 #404040,inset -2px -2px 0 #808080;"></div>
<svg class="a" style="left:590px;top:789px;" width="5" height="3" viewBox="590 789 5 3" shape-rendering="crispEdges"><path d="M590 791.5h5l-2.5-2.5z" fill="#000" shape-rendering="auto"/></svg>
<svg class="a" style="left:590px;top:801px;" width="5" height="3" viewBox="590 801 5 3" shape-rendering="crispEdges"><path d="M590 801h5l-2.5 2.5z" fill="#000" shape-rendering="auto"/></svg>
<div class="t" style="left:601px;top:769.34px;color:#000;font-size:12px;letter-spacing:0px;transform:scaleX(0.88);transform-origin:0 0;">SFL</div>
<div class="a" style="left:624px;top:764px;width:46px;height:21px;background:#fff;box-shadow:inset 1px 1px 0 #808080,inset 2px 2px 0 #404040,inset -1px -1px 0 #fff,inset -2px -2px 0 #D4D0C8"></div>
<div class="t" style="right:157px;top:768.34px;color:#000;font-size:12px;letter-spacing:0px;transform:scaleX(0.88);transform-origin:100% 0;">0s</div>
<div class="a" style="left:670px;top:764px;width:11px;height:10px;background:#D4D0C8;box-shadow:inset 1px 1px 0 #fff,inset -1px -1px 0 #404040,inset -2px -2px 0 #808080;"></div>
<div class="a" style="left:670px;top:774px;width:11px;height:11px;background:#D4D0C8;box-shadow:inset 1px 1px 0 #fff,inset -1px -1px 0 #404040,inset -2px -2px 0 #808080;"></div>
<svg class="a" style="left:673px;top:767px;" width="5" height="3" viewBox="673 767 5 3" shape-rendering="crispEdges"><path d="M673 769.5h5l-2.5-2.5z" fill="#000" shape-rendering="auto"/></svg>
<svg class="a" style="left:673px;top:779px;" width="5" height="3" viewBox="673 779 5 3" shape-rendering="crispEdges"><path d="M673 779h5l-2.5 2.5z" fill="#000" shape-rendering="auto"/></svg>
<div class="t" style="left:601px;top:791.34px;color:#000;font-size:12px;letter-spacing:0px;transform:scaleX(0.88);transform-origin:0 0;">NOS</div>
<div class="a" style="left:632px;top:786px;width:38px;height:21px;background:#fff;box-shadow:inset 1px 1px 0 #808080,inset 2px 2px 0 #404040,inset -1px -1px 0 #fff,inset -2px -2px 0 #D4D0C8"></div>
<div class="t" style="right:157px;top:791.34px;color:#000;font-size:12px;letter-spacing:0px;transform:scaleX(0.88);transform-origin:100% 0;">1</div>
<div class="a" style="left:670px;top:786px;width:11px;height:10px;background:#D4D0C8;box-shadow:inset 1px 1px 0 #fff,inset -1px -1px 0 #404040,inset -2px -2px 0 #808080;"></div>
<div class="a" style="left:670px;top:796px;width:11px;height:11px;background:#D4D0C8;box-shadow:inset 1px 1px 0 #fff,inset -1px -1px 0 #404040,inset -2px -2px 0 #808080;"></div>
<svg class="a" style="left:673px;top:789px;" width="5" height="3" viewBox="673 789 5 3" shape-rendering="crispEdges"><path d="M673 791.5h5l-2.5-2.5z" fill="#000" shape-rendering="auto"/></svg>
<svg class="a" style="left:673px;top:801px;" width="5" height="3" viewBox="673 801 5 3" shape-rendering="crispEdges"><path d="M673 801h5l-2.5 2.5z" fill="#000" shape-rendering="auto"/></svg>
<div class="t" style="left:725px;top:687.34px;color:#000;font-size:12px;letter-spacing:0px;transform:scaleX(0.88);transform-origin:0 0;">Hold-off</div>
<div class="a" style="left:686px;top:701px;width:83px;height:21px;background:#fff;box-shadow:inset 1px 1px 0 #808080,inset 2px 2px 0 #404040,inset -1px -1px 0 #fff,inset -2px -2px 0 #D4D0C8"></div>
<div class="t" style="right:57px;top:704.34px;color:#808080;font-size:12px;letter-spacing:0px;transform:scaleX(0.88);transform-origin:100% 0;">7,44us</div>
<div class="a" style="left:769px;top:701px;width:35px;height:21px;background:#D4D0C8;box-shadow:inset 1px 1px 0 #fff,inset -1px -1px 0 #404040,inset -2px -2px 0 #808080;"></div>
<div class="t" style="left:775px;top:704.34px;color:#000;font-size:12px;letter-spacing:0px;transform:scaleX(0.88);transform-origin:0 0;">Auto</div>
<div class="a" style="left:686px;top:723px;width:117px;height:1px;background:#808080"></div>
<div class="a" style="left:686px;top:723px;width:1px;height:17px;background:#808080"></div>
<div class="a" style="left:686px;top:740px;width:118px;height:1px;background:#fff"></div>
<div class="a" style="left:803px;top:723px;width:1px;height:18px;background:#fff"></div>
<div class="a" style="left:687px;top:724px;width:116px;height:16px;background:repeating-conic-gradient(#fff 0 25%,#D4D0C8 0 50%) 0 0/2px 2px"></div>
<div class="a" style="left:687px;top:724px;width:16px;height:16px;background:#D4D0C8;box-shadow:inset 1px 1px 0 #D4D0C8,inset 2px 2px 0 #fff,inset -1px -1px 0 #404040,inset -2px -2px 0 #808080"></div>
<div class="a" style="left:787px;top:724px;width:16px;height:16px;background:#D4D0C8;box-shadow:inset 1px 1px 0 #D4D0C8,inset 2px 2px 0 #fff,inset -1px -1px 0 #404040,inset -2px -2px 0 #808080"></div>
<svg class="a" style="left:687px;top:724px;" width="116" height="16" viewBox="687 724 116 16" shape-rendering="crispEdges"><path d="M693 732h1v1h-1zM694 731h1v3h-1zM695 730h1v5h-1zM696 729h1v7h-1zM794 729h1v7h-1zM795 730h1v5h-1zM796 731h1v3h-1zM797 732h1v1h-1z" fill="#fff"/><path d="M692 731h1v1h-1zM693 730h1v3h-1zM694 729h1v5h-1zM695 728h1v7h-1zM793 728h1v7h-1zM794 729h1v5h-1zM795 730h1v3h-1zM796 731h1v1h-1z" fill="#808080"/></svg>
<div class="t" style="left:715px;top:753.34px;color:#000;font-size:12px;letter-spacing:0px;transform:scaleX(0.88);transform-origin:0 0;">After trigger</div>
<div class="a" style="left:686px;top:767px;width:71px;height:21px;background:#fff;box-shadow:inset 1px 1px 0 #808080,inset 2px 2px 0 #404040,inset -1px -1px 0 #fff,inset -2px -2px 0 #D4D0C8"></div>
<div class="t" style="right:70px;top:771.34px;color:#000;font-size:12px;letter-spacing:0px;transform:scaleX(0.88);transform-origin:100% 0;">320,23us</div>
<div class="a" style="left:757px;top:767px;width:30px;height:21px;background:#D4D0C8;box-shadow:inset 1px 1px 0 #fff,inset -1px -1px 0 #404040,inset -2px -2px 0 #808080;"></div>
<div class="t" style="left:764px;top:771.34px;color:#000;font-size:12px;letter-spacing:0px;transform:scaleX(0.88);transform-origin:0 0;">Set</div>
<div class="a" style="left:787px;top:767px;width:17px;height:21px;background:#D4D0C8;box-shadow:inset 1px 1px 0 #fff,inset -1px -1px 0 #404040,inset -2px -2px 0 #808080;"></div>
<div class="t" style="left:792px;top:771.34px;color:#000;font-size:12px;letter-spacing:0px;transform:scaleX(0.88);transform-origin:0 0;">s</div>
<div class="a" style="left:686px;top:789px;width:117px;height:1px;background:#808080"></div>
<div class="a" style="left:686px;top:789px;width:1px;height:17px;background:#808080"></div>
<div class="a" style="left:686px;top:806px;width:118px;height:1px;background:#fff"></div>
<div class="a" style="left:803px;top:789px;width:1px;height:18px;background:#fff"></div>
<div class="a" style="left:687px;top:790px;width:116px;height:16px;background:repeating-conic-gradient(#fff 0 25%,#D4D0C8 0 50%) 0 0/2px 2px"></div>
<div class="a" style="left:687px;top:790px;width:16px;height:16px;background:#D4D0C8;box-shadow:inset 1px 1px 0 #D4D0C8,inset 2px 2px 0 #fff,inset -1px -1px 0 #404040,inset -2px -2px 0 #808080"></div>
<div class="a" style="left:787px;top:790px;width:16px;height:16px;background:#D4D0C8;box-shadow:inset 1px 1px 0 #D4D0C8,inset 2px 2px 0 #fff,inset -1px -1px 0 #404040,inset -2px -2px 0 #808080"></div>
<div class="a" style="left:772px;top:790px;width:16px;height:16px;background:#D4D0C8;box-shadow:inset 1px 1px 0 #D4D0C8,inset 2px 2px 0 #fff,inset -1px -1px 0 #404040,inset -2px -2px 0 #808080"></div>
<svg class="a" style="left:687px;top:790px;" width="116" height="16" viewBox="687 790 116 16" shape-rendering="crispEdges"><path d="M692 797h1v1h-1zM693 796h1v3h-1zM694 795h1v5h-1zM695 794h1v7h-1zM793 794h1v7h-1zM794 795h1v5h-1zM795 796h1v3h-1zM796 797h1v1h-1z" fill="#000"/></svg>
</body></html>
